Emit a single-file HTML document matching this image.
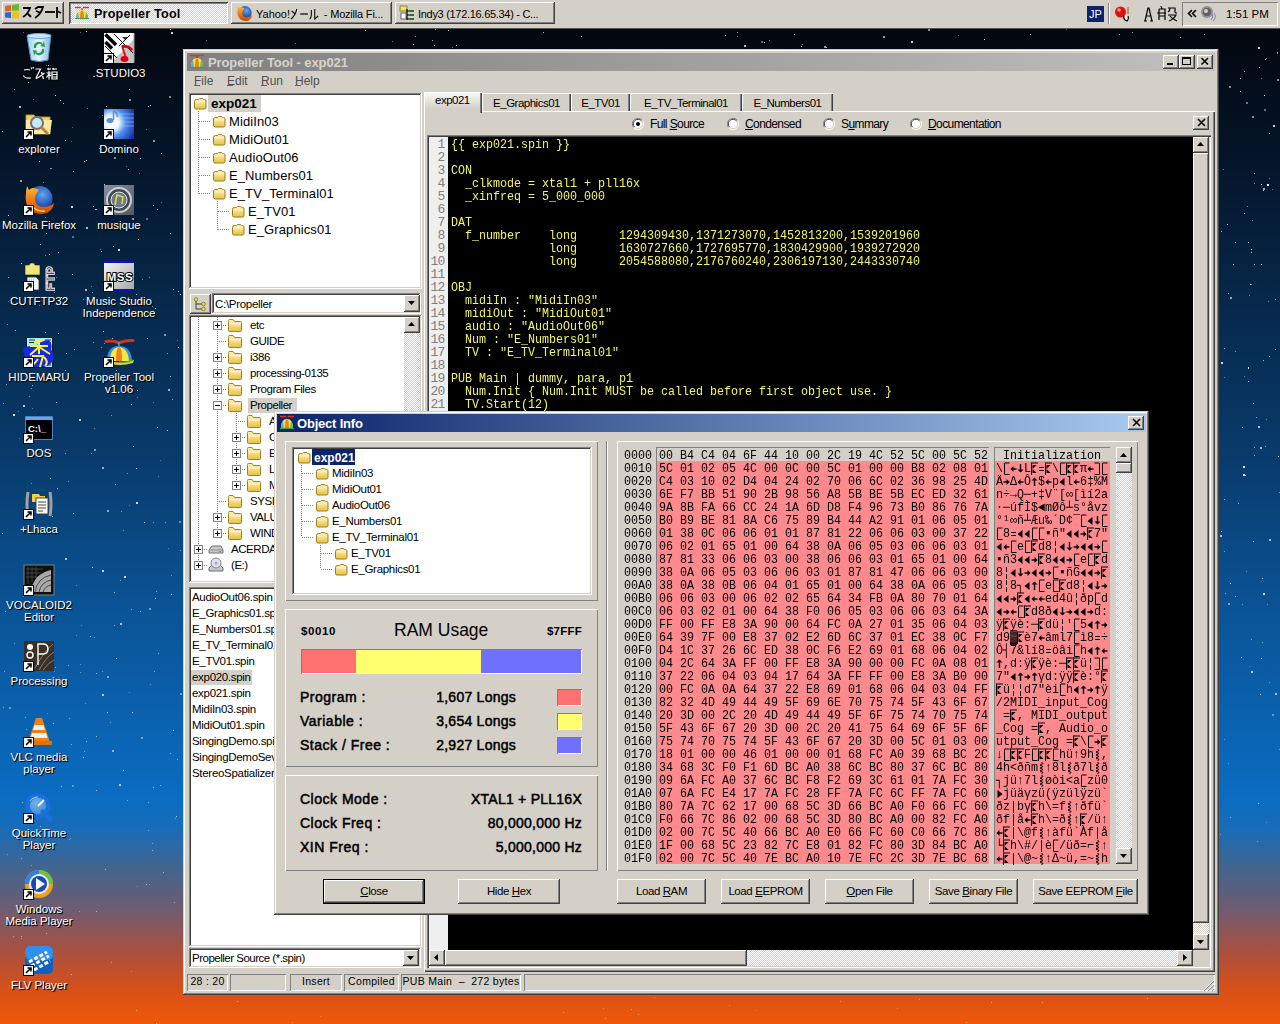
<!DOCTYPE html>
<html><head><meta charset="utf-8"><style>
*{margin:0;padding:0;box-sizing:border-box}
html,body{width:1280px;height:1024px;overflow:hidden}
body{position:relative;font-family:"Liberation Sans",sans-serif;font-size:11px;color:#000;
background:linear-gradient(to bottom,#03070e 28px,#041428 150px,#06284a 300px,#083a6a 450px,#0a5294 600px,#0a62b0 720px,#0a6cc2 800px,#1a6cb8 830px,#44648c 870px,#705c70 910px,#a85040 950px,#d85018 990px,#f05808 1024px)}
.a{position:absolute}
.t{position:absolute;white-space:pre;line-height:1}
.face{background:#d4d0c8}
.raised{background:#d4d0c8;box-shadow:inset -1px -1px #404040,inset 1px 1px #fff,inset -2px -2px #808080,inset 2px 2px #d4d0c8}
.btn{background:#d4d0c8;box-shadow:inset -1px -1px #404040,inset 1px 1px #fff,inset -2px -2px #808080}
.sunken{box-shadow:inset -1px -1px #fff,inset 1px 1px #808080,inset -2px -2px #d4d0c8,inset 2px 2px #404040}
.etched{box-shadow:inset 1px 1px #808080,inset -1px -1px #fff,inset 2px 2px #fff,inset -2px -2px #808080}
.win{background:#d4d0c8;box-shadow:inset -1px -1px #404040,inset 1px 1px #d4d0c8,inset -2px -2px #808080,inset 2px 2px #fff}
.mono{font-family:"Liberation Mono",monospace}
.lbl{position:absolute;color:#fff;font-size:11.5px;text-align:center;line-height:12px;text-shadow:1px 1px 0 #000,1px 1px 1px rgba(0,0,0,.6);white-space:pre}
.dotv{position:absolute;width:1px;background:repeating-linear-gradient(to bottom,#808080 0 1px,transparent 1px 2px)}
.doth{position:absolute;height:1px;background:repeating-linear-gradient(to right,#808080 0 1px,transparent 1px 2px)}
.pm{position:absolute;width:9px;height:9px;border:1px solid #808080;background:#fff}
.pm:before{content:"";position:absolute;left:1px;top:3px;width:5px;height:1px;background:#000}
.pm.p:after{content:"";position:absolute;left:3px;top:1px;width:1px;height:5px;background:#000}
.scr{background:repeating-conic-gradient(#fff 0 25%,#d4d0c8 0 50%) 0 0/2px 2px}
</style></head><body>
<svg width="0" height="0" style="position:absolute">
<defs>
<linearGradient id="fg" x1="0" y1="0" x2="0" y2="1"><stop offset="0" stop-color="#fff6c0"/><stop offset="1" stop-color="#e8c040"/></linearGradient>
<symbol id="fold" viewBox="0 0 16 16"><path d="M1.5 4.5 V13.5 Q1.5 14.5 2.5 14.5 H13.5 Q14.5 14.5 14.5 13.5 V5.5 Q14.5 4.5 13.5 4.5 H7.5 L6 2.5 H2.5 Q1.5 2.5 1.5 3.5Z" fill="url(#fg)" stroke="#a08020"/><path d="M2 7 H14" stroke="#fff8d0"/></symbol>
<symbol id="fold2" viewBox="0 0 16 16"><path d="M1.5 4.5 V13.5 Q1.5 14.5 2.5 14.5 H13.5 Q14.5 14.5 14.5 13.5 V5.5 Q14.5 4.5 13.5 4.5 H7.5 L6 2.5 H2.5 Q1.5 2.5 1.5 3.5Z" fill="url(#fg)" stroke="#a08020"/><path d="M2 6.5 H14" stroke="#c0a030"/></symbol>
<symbol id="foldS" viewBox="0 0 16 16"><path d="M2.5 6.5 Q2.5 4.5 4.5 4.5 H6.5 L7.5 3.5 H10 Q11 3.5 11.5 4.5 H12.5 Q14 4.5 14 6 V12.5 Q14 14 12.5 14 H4 Q2.5 14 2.5 12.5Z" fill="url(#fg)" stroke="#9a7a20"/><path d="M3.5 7 H13" stroke="#fff8d8" stroke-width=".8"/></symbol>
<symbol id="arr" viewBox="0 0 11 11"><rect x="0.5" y="0.5" width="10" height="10" fill="#fff" stroke="#000"/><path d="M3 8 L8 3 M4.5 3 H8 V6.5" stroke="#000" stroke-width="1.5" fill="none"/></symbol>
<symbol id="prop" viewBox="0 0 16 16"><path d="M1 1.5 H7 M9 1.5 H15" stroke="#e03030" stroke-width="1.6"/><path d="M8 1 V4" stroke="#404040"/><path d="M2 13 Q2 4 8 4 Q14 4 14 13Z" fill="#f0e040"/><path d="M6 13 Q6 5 8 4 Q10 5 10 13Z" fill="#f08020"/><path d="M2 13 Q2 8 4 6 L5 13Z" fill="#58b0e0"/><path d="M14 13 Q14 8 12 6 L11 13Z" fill="#60c060"/><path d="M1 13.5 H15" stroke="#40a040" stroke-width="1.2"/></symbol>
</defs></svg>
<svg class="a" style="left:0;top:0" width="1280" height="1024" shape-rendering="crispEdges"><rect x="1257" y="841" width="1" height="1" fill="#fff" opacity="0.42"/><rect x="1260" y="694" width="1" height="1" fill="#fff" opacity="0.69"/><rect x="129" y="89" width="1" height="1" fill="#fff" opacity="0.74"/><rect x="9" y="707" width="2" height="2" fill="#fff" opacity="0.40"/><rect x="170" y="753" width="1" height="1" fill="#fff" opacity="0.50"/><rect x="60" y="100" width="1" height="1" fill="#fff" opacity="0.61"/><rect x="136" y="1010" width="1" height="1" fill="#fff" opacity="0.41"/><rect x="107" y="510" width="2" height="2" fill="#fff" opacity="0.53"/><rect x="149" y="608" width="2" height="2" fill="#fff" opacity="0.43"/><rect x="178" y="347" width="1" height="1" fill="#fff" opacity="0.79"/><rect x="206" y="40" width="1" height="1" fill="#fff" opacity="0.47"/><rect x="435" y="29" width="1" height="1" fill="#fff" opacity="0.55"/><rect x="40" y="244" width="1" height="1" fill="#fff" opacity="0.75"/><rect x="150" y="105" width="1" height="1" fill="#fff" opacity="0.76"/><rect x="31" y="644" width="1" height="1" fill="#fff" opacity="0.52"/><rect x="1250" y="284" width="1" height="1" fill="#fff" opacity="0.80"/><rect x="160" y="460" width="1" height="1" fill="#fff" opacity="0.34"/><rect x="1221" y="531" width="1" height="1" fill="#fff" opacity="0.83"/><rect x="140" y="158" width="1" height="1" fill="#fff" opacity="0.77"/><rect x="1261" y="658" width="1" height="1" fill="#fff" opacity="0.75"/><rect x="33" y="99" width="1" height="1" fill="#fff" opacity="0.51"/><rect x="95" y="209" width="1" height="1" fill="#fff" opacity="0.71"/><rect x="71" y="974" width="1" height="1" fill="#fff" opacity="0.52"/><rect x="638" y="1014" width="1" height="1" fill="#fff" opacity="0.38"/><rect x="153" y="522" width="1" height="1" fill="#fff" opacity="0.48"/><rect x="148" y="106" width="1" height="1" fill="#fff" opacity="0.82"/><rect x="173" y="730" width="1" height="1" fill="#fff" opacity="0.68"/><rect x="29" y="668" width="1" height="1" fill="#fff" opacity="0.57"/><rect x="1246" y="102" width="2" height="2" fill="#fff" opacity="0.42"/><rect x="179" y="521" width="2" height="2" fill="#fff" opacity="0.37"/><rect x="23" y="405" width="2" height="2" fill="#fff" opacity="0.69"/><rect x="83" y="757" width="1" height="1" fill="#fff" opacity="0.64"/><rect x="1279" y="492" width="1" height="1" fill="#fff" opacity="0.47"/><rect x="1244" y="71" width="1" height="1" fill="#fff" opacity="0.72"/><rect x="96" y="673" width="1" height="1" fill="#fff" opacity="0.60"/><rect x="755" y="1010" width="1" height="1" fill="#fff" opacity="0.25"/><rect x="22" y="802" width="1" height="1" fill="#fff" opacity="0.56"/><rect x="1258" y="803" width="1" height="1" fill="#fff" opacity="0.62"/><rect x="13" y="414" width="2" height="2" fill="#fff" opacity="0.85"/><rect x="32" y="385" width="1" height="1" fill="#fff" opacity="0.59"/><rect x="58" y="252" width="1" height="1" fill="#fff" opacity="0.61"/><rect x="71" y="206" width="2" height="2" fill="#fff" opacity="0.84"/><rect x="1248" y="242" width="1" height="1" fill="#fff" opacity="0.95"/><rect x="1030" y="34" width="1" height="1" fill="#fff" opacity="0.70"/><rect x="1265" y="59" width="1" height="1" fill="#fff" opacity="0.81"/><rect x="46" y="65" width="1" height="1" fill="#fff" opacity="0.36"/><rect x="1269" y="539" width="2" height="2" fill="#fff" opacity="0.63"/><rect x="1235" y="351" width="1" height="1" fill="#fff" opacity="0.46"/><rect x="180" y="294" width="1" height="1" fill="#fff" opacity="0.85"/><rect x="36" y="127" width="2" height="2" fill="#fff" opacity="0.58"/><rect x="144" y="522" width="1" height="1" fill="#fff" opacity="0.74"/><rect x="126" y="166" width="1" height="1" fill="#fff" opacity="0.40"/><rect x="764" y="42" width="1" height="1" fill="#fff" opacity="0.90"/><rect x="31" y="360" width="2" height="2" fill="#fff" opacity="0.86"/><rect x="1227" y="224" width="1" height="1" fill="#fff" opacity="0.85"/><rect x="21" y="938" width="1" height="1" fill="#fff" opacity="0.44"/><rect x="1277" y="79" width="2" height="2" fill="#fff" opacity="0.54"/><rect x="157" y="427" width="1" height="1" fill="#fff" opacity="0.70"/><rect x="46" y="146" width="2" height="2" fill="#fff" opacity="0.50"/><rect x="769" y="40" width="1" height="1" fill="#fff" opacity="0.53"/><rect x="156" y="591" width="1" height="1" fill="#fff" opacity="0.50"/><rect x="966" y="1022" width="1" height="1" fill="#fff" opacity="0.34"/><rect x="1251" y="639" width="1" height="1" fill="#fff" opacity="0.50"/><rect x="1224" y="348" width="1" height="1" fill="#fff" opacity="0.63"/><rect x="28" y="820" width="1" height="1" fill="#fff" opacity="0.26"/><rect x="1278" y="456" width="1" height="1" fill="#fff" opacity="0.82"/><rect x="1230" y="297" width="2" height="2" fill="#fff" opacity="0.60"/><rect x="80" y="672" width="1" height="1" fill="#fff" opacity="0.41"/><rect x="55" y="667" width="1" height="1" fill="#fff" opacity="0.55"/><rect x="148" y="802" width="1" height="1" fill="#fff" opacity="0.55"/><rect x="152" y="850" width="1" height="1" fill="#fff" opacity="0.57"/><rect x="1221" y="362" width="2" height="2" fill="#fff" opacity="0.83"/><rect x="19" y="106" width="2" height="2" fill="#fff" opacity="0.74"/><rect x="172" y="399" width="1" height="1" fill="#fff" opacity="0.54"/><rect x="45" y="255" width="1" height="1" fill="#fff" opacity="0.44"/><rect x="605" y="1018" width="1" height="1" fill="#fff" opacity="0.45"/><rect x="53" y="678" width="1" height="1" fill="#fff" opacity="0.65"/><rect x="94" y="449" width="2" height="2" fill="#fff" opacity="0.52"/><rect x="7" y="854" width="1" height="1" fill="#fff" opacity="0.27"/><rect x="49" y="565" width="1" height="1" fill="#fff" opacity="0.74"/><rect x="121" y="511" width="1" height="1" fill="#fff" opacity="0.48"/><rect x="127" y="800" width="1" height="1" fill="#fff" opacity="0.51"/><rect x="74" y="349" width="1" height="1" fill="#fff" opacity="0.55"/><rect x="1228" y="763" width="1" height="1" fill="#fff" opacity="0.36"/><rect x="101" y="251" width="1" height="1" fill="#fff" opacity="0.95"/><rect x="1268" y="301" width="1" height="1" fill="#fff" opacity="0.43"/><rect x="365" y="30" width="1" height="1" fill="#fff" opacity="0.88"/><rect x="168" y="389" width="2" height="2" fill="#fff" opacity="0.64"/><rect x="38" y="837" width="1" height="1" fill="#fff" opacity="0.32"/><rect x="76" y="585" width="1" height="1" fill="#fff" opacity="0.38"/><rect x="155" y="598" width="1" height="1" fill="#fff" opacity="0.65"/><rect x="137" y="397" width="1" height="1" fill="#fff" opacity="0.39"/><rect x="911" y="41" width="2" height="2" fill="#fff" opacity="0.81"/><rect x="1261" y="184" width="1" height="1" fill="#fff" opacity="0.94"/><rect x="178" y="291" width="1" height="1" fill="#fff" opacity="0.79"/><rect x="1273" y="125" width="2" height="2" fill="#fff" opacity="0.80"/><rect x="31" y="773" width="2" height="2" fill="#fff" opacity="0.40"/><rect x="1246" y="571" width="1" height="1" fill="#fff" opacity="0.40"/><rect x="1253" y="541" width="1" height="1" fill="#fff" opacity="0.70"/><rect x="54" y="671" width="1" height="1" fill="#fff" opacity="0.34"/><rect x="7" y="324" width="1" height="1" fill="#fff" opacity="0.48"/><rect x="33" y="191" width="1" height="1" fill="#fff" opacity="0.37"/><rect x="49" y="357" width="1" height="1" fill="#fff" opacity="0.77"/><rect x="142" y="279" width="1" height="1" fill="#fff" opacity="0.49"/><rect x="146" y="129" width="1" height="1" fill="#fff" opacity="0.43"/><rect x="928" y="29" width="2" height="2" fill="#fff" opacity="0.54"/><rect x="93" y="342" width="1" height="1" fill="#fff" opacity="0.52"/><rect x="120" y="229" width="1" height="1" fill="#fff" opacity="0.91"/><rect x="32" y="205" width="2" height="2" fill="#fff" opacity="0.98"/><rect x="102" y="694" width="2" height="2" fill="#fff" opacity="0.68"/><rect x="161" y="202" width="1" height="1" fill="#fff" opacity="0.42"/><rect x="14" y="643" width="1" height="1" fill="#fff" opacity="0.41"/><rect x="68" y="665" width="1" height="1" fill="#fff" opacity="0.47"/><rect x="65" y="558" width="2" height="2" fill="#fff" opacity="0.68"/><rect x="1245" y="475" width="1" height="1" fill="#fff" opacity="0.63"/><rect x="72" y="236" width="2" height="2" fill="#fff" opacity="0.37"/><rect x="36" y="652" width="1" height="1" fill="#fff" opacity="0.54"/><rect x="63" y="103" width="1" height="1" fill="#fff" opacity="0.72"/><rect x="86" y="741" width="1" height="1" fill="#fff" opacity="0.61"/><rect x="1220" y="834" width="1" height="1" fill="#fff" opacity="0.37"/><rect x="86" y="160" width="1" height="1" fill="#fff" opacity="0.98"/><rect x="80" y="32" width="1" height="1" fill="#fff" opacity="0.44"/><rect x="156" y="1023" width="1" height="1" fill="#fff" opacity="0.50"/><rect x="1254" y="264" width="1" height="1" fill="#fff" opacity="0.69"/><rect x="1251" y="252" width="1" height="1" fill="#fff" opacity="0.71"/><rect x="119" y="784" width="2" height="2" fill="#fff" opacity="0.67"/><rect x="100" y="249" width="1" height="1" fill="#fff" opacity="0.46"/><rect x="96" y="736" width="1" height="1" fill="#fff" opacity="0.56"/><rect x="117" y="186" width="1" height="1" fill="#fff" opacity="0.43"/><rect x="112" y="338" width="1" height="1" fill="#fff" opacity="0.63"/><rect x="1251" y="249" width="1" height="1" fill="#fff" opacity="0.81"/><rect x="123" y="530" width="1" height="1" fill="#fff" opacity="0.46"/><rect x="111" y="415" width="1" height="1" fill="#fff" opacity="0.50"/><rect x="48" y="65" width="1" height="1" fill="#fff" opacity="0.72"/><rect x="154" y="671" width="1" height="1" fill="#fff" opacity="0.48"/><rect x="43" y="182" width="1" height="1" fill="#fff" opacity="0.49"/><rect x="1066" y="29" width="1" height="1" fill="#fff" opacity="0.35"/><rect x="39" y="349" width="1" height="1" fill="#fff" opacity="0.76"/><rect x="320" y="1016" width="1" height="1" fill="#fff" opacity="0.23"/><rect x="129" y="99" width="2" height="2" fill="#fff" opacity="0.55"/><rect x="1272" y="714" width="2" height="2" fill="#fff" opacity="0.36"/><rect x="28" y="512" width="1" height="1" fill="#fff" opacity="0.46"/><rect x="86" y="227" width="2" height="2" fill="#fff" opacity="0.68"/><rect x="1265" y="446" width="1" height="1" fill="#fff" opacity="0.55"/><rect x="39" y="305" width="1" height="1" fill="#fff" opacity="0.50"/><rect x="165" y="522" width="1" height="1" fill="#fff" opacity="0.45"/><rect x="104" y="184" width="1" height="1" fill="#fff" opacity="0.77"/><rect x="8" y="215" width="1" height="1" fill="#fff" opacity="0.98"/><rect x="65" y="453" width="1" height="1" fill="#fff" opacity="0.55"/><rect x="118" y="249" width="2" height="2" fill="#fff" opacity="0.86"/><rect x="96" y="209" width="1" height="1" fill="#fff" opacity="0.69"/><rect x="152" y="306" width="1" height="1" fill="#fff" opacity="0.53"/><rect x="21" y="936" width="1" height="1" fill="#fff" opacity="0.57"/><rect x="1277" y="53" width="1" height="1" fill="#fff" opacity="0.50"/><rect x="96" y="790" width="1" height="1" fill="#fff" opacity="0.56"/><rect x="19" y="438" width="1" height="1" fill="#fff" opacity="0.37"/><rect x="20" y="180" width="2" height="2" fill="#fff" opacity="0.59"/><rect x="113" y="246" width="1" height="1" fill="#fff" opacity="0.90"/><rect x="1230" y="583" width="1" height="1" fill="#fff" opacity="0.79"/><rect x="94" y="637" width="1" height="1" fill="#fff" opacity="0.36"/><rect x="1275" y="349" width="1" height="1" fill="#fff" opacity="0.94"/><rect x="132" y="218" width="2" height="2" fill="#fff" opacity="0.56"/><rect x="1258" y="426" width="2" height="2" fill="#fff" opacity="0.69"/><rect x="180" y="693" width="2" height="2" fill="#fff" opacity="0.43"/><rect x="31" y="865" width="1" height="1" fill="#fff" opacity="0.36"/><rect x="1235" y="242" width="1" height="1" fill="#fff" opacity="0.82"/><rect x="84" y="161" width="1" height="1" fill="#fff" opacity="0.95"/><rect x="1249" y="666" width="1" height="1" fill="#fff" opacity="0.28"/><rect x="141" y="737" width="2" height="2" fill="#fff" opacity="0.43"/><rect x="1254" y="447" width="1" height="1" fill="#fff" opacity="0.61"/><rect x="131" y="404" width="1" height="1" fill="#fff" opacity="0.67"/><rect x="25" y="717" width="1" height="1" fill="#fff" opacity="0.47"/><rect x="744" y="45" width="2" height="2" fill="#fff" opacity="0.73"/><rect x="47" y="713" width="1" height="1" fill="#fff" opacity="0.30"/><rect x="1240" y="91" width="1" height="1" fill="#fff" opacity="0.99"/><rect x="136" y="502" width="2" height="2" fill="#fff" opacity="0.84"/><rect x="171" y="32" width="2" height="2" fill="#fff" opacity="0.80"/><rect x="32" y="408" width="1" height="1" fill="#fff" opacity="0.39"/><rect x="180" y="550" width="1" height="1" fill="#fff" opacity="0.50"/><rect x="21" y="263" width="1" height="1" fill="#fff" opacity="0.80"/><rect x="1266" y="58" width="1" height="1" fill="#fff" opacity="0.54"/><rect x="94" y="428" width="1" height="1" fill="#fff" opacity="0.45"/><rect x="1147" y="998" width="1" height="1" fill="#fff" opacity="0.52"/><rect x="1228" y="293" width="1" height="1" fill="#fff" opacity="0.60"/><rect x="101" y="347" width="1" height="1" fill="#fff" opacity="0.43"/><rect x="991" y="1002" width="1" height="1" fill="#fff" opacity="0.44"/><rect x="18" y="411" width="1" height="1" fill="#fff" opacity="0.33"/><rect x="1224" y="739" width="1" height="1" fill="#fff" opacity="0.36"/><rect x="66" y="353" width="1" height="1" fill="#fff" opacity="0.81"/><rect x="171" y="594" width="1" height="1" fill="#fff" opacity="0.64"/><rect x="1119" y="34" width="1" height="1" fill="#fff" opacity="0.62"/><rect x="153" y="205" width="1" height="1" fill="#fff" opacity="0.78"/><rect x="146" y="884" width="1" height="1" fill="#fff" opacity="0.56"/><rect x="413" y="44" width="1" height="1" fill="#fff" opacity="0.77"/><rect x="92" y="292" width="1" height="1" fill="#fff" opacity="0.57"/><rect x="1264" y="95" width="1" height="1" fill="#fff" opacity="0.94"/><rect x="1269" y="133" width="1" height="1" fill="#fff" opacity="0.89"/><rect x="71" y="744" width="1" height="1" fill="#fff" opacity="0.52"/><rect x="1248" y="381" width="1" height="1" fill="#fff" opacity="0.68"/><rect x="41" y="205" width="1" height="1" fill="#fff" opacity="0.77"/><rect x="155" y="308" width="1" height="1" fill="#fff" opacity="0.92"/><rect x="147" y="338" width="1" height="1" fill="#fff" opacity="0.90"/><rect x="139" y="173" width="1" height="1" fill="#fff" opacity="0.44"/><rect x="158" y="476" width="1" height="1" fill="#fff" opacity="0.36"/><rect x="41" y="652" width="1" height="1" fill="#fff" opacity="0.80"/><rect x="176" y="816" width="1" height="1" fill="#fff" opacity="0.66"/><rect x="65" y="140" width="1" height="1" fill="#fff" opacity="0.96"/><rect x="49" y="453" width="1" height="1" fill="#fff" opacity="0.72"/><rect x="170" y="29" width="1" height="1" fill="#fff" opacity="0.98"/><rect x="802" y="44" width="1" height="1" fill="#fff" opacity="0.52"/><rect x="1249" y="295" width="1" height="1" fill="#fff" opacity="0.49"/><rect x="45" y="217" width="1" height="1" fill="#fff" opacity="0.53"/><rect x="70" y="838" width="1" height="1" fill="#fff" opacity="0.27"/><rect x="91" y="453" width="1" height="1" fill="#fff" opacity="0.53"/><rect x="149" y="884" width="1" height="1" fill="#fff" opacity="0.27"/><rect x="28" y="82" width="1" height="1" fill="#fff" opacity="0.97"/><rect x="138" y="239" width="1" height="1" fill="#fff" opacity="0.95"/><rect x="654" y="997" width="1" height="1" fill="#fff" opacity="0.27"/><rect x="146" y="218" width="2" height="2" fill="#fff" opacity="0.37"/><rect x="456" y="45" width="1" height="1" fill="#fff" opacity="0.98"/><rect x="1224" y="499" width="1" height="1" fill="#fff" opacity="0.57"/><rect x="50" y="478" width="1" height="1" fill="#fff" opacity="0.63"/><rect x="93" y="206" width="1" height="1" fill="#fff" opacity="0.96"/><rect x="49" y="254" width="1" height="1" fill="#fff" opacity="0.72"/><rect x="129" y="505" width="1" height="1" fill="#fff" opacity="0.32"/><rect x="1267" y="604" width="1" height="1" fill="#fff" opacity="0.42"/><rect x="1254" y="455" width="1" height="1" fill="#fff" opacity="0.59"/><rect x="6" y="384" width="1" height="1" fill="#fff" opacity="0.63"/><rect x="3" y="707" width="1" height="1" fill="#fff" opacity="0.51"/><rect x="115" y="121" width="2" height="2" fill="#fff" opacity="0.66"/><rect x="292" y="1022" width="1" height="1" fill="#fff" opacity="0.35"/><rect x="102" y="115" width="1" height="1" fill="#fff" opacity="0.50"/><rect x="85" y="289" width="2" height="2" fill="#fff" opacity="0.65"/><rect x="132" y="712" width="1" height="1" fill="#fff" opacity="0.75"/><rect x="1275" y="693" width="2" height="2" fill="#fff" opacity="0.61"/><rect x="5" y="611" width="1" height="1" fill="#fff" opacity="0.63"/><rect x="46" y="933" width="1" height="1" fill="#fff" opacity="0.51"/><rect x="1266" y="822" width="1" height="1" fill="#fff" opacity="0.30"/><rect x="111" y="962" width="1" height="1" fill="#fff" opacity="0.39"/><rect x="116" y="370" width="1" height="1" fill="#fff" opacity="0.64"/><rect x="72" y="127" width="1" height="1" fill="#fff" opacity="0.38"/><rect x="143" y="376" width="1" height="1" fill="#fff" opacity="0.51"/><rect x="161" y="153" width="1" height="1" fill="#fff" opacity="0.79"/><rect x="25" y="569" width="1" height="1" fill="#fff" opacity="0.72"/><rect x="116" y="658" width="1" height="1" fill="#fff" opacity="0.78"/><rect x="84" y="751" width="1" height="1" fill="#fff" opacity="0.46"/><rect x="114" y="592" width="1" height="1" fill="#fff" opacity="0.54"/><rect x="1260" y="447" width="2" height="2" fill="#fff" opacity="0.65"/><rect x="824" y="46" width="2" height="2" fill="#fff" opacity="0.60"/><rect x="69" y="839" width="1" height="1" fill="#fff" opacity="0.35"/><rect x="1277" y="52" width="1" height="1" fill="#fff" opacity="0.75"/><rect x="153" y="787" width="1" height="1" fill="#fff" opacity="0.58"/><rect x="1230" y="817" width="1" height="1" fill="#fff" opacity="0.50"/><rect x="801" y="46" width="1" height="1" fill="#fff" opacity="0.85"/><rect x="1256" y="417" width="1" height="1" fill="#fff" opacity="0.50"/><rect x="105" y="869" width="1" height="1" fill="#fff" opacity="0.50"/><rect x="51" y="168" width="1" height="1" fill="#fff" opacity="0.55"/><rect x="1042" y="1002" width="1" height="1" fill="#fff" opacity="0.44"/><rect x="1240" y="78" width="1" height="1" fill="#fff" opacity="0.71"/><rect x="106" y="106" width="1" height="1" fill="#fff" opacity="0.80"/><rect x="49" y="581" width="2" height="2" fill="#fff" opacity="0.51"/><rect x="1251" y="284" width="1" height="1" fill="#fff" opacity="0.41"/><rect x="42" y="529" width="1" height="1" fill="#fff" opacity="0.32"/><rect x="1279" y="749" width="1" height="1" fill="#fff" opacity="0.42"/><rect x="1269" y="356" width="1" height="1" fill="#fff" opacity="0.81"/><rect x="90" y="636" width="1" height="1" fill="#fff" opacity="0.60"/><rect x="737" y="32" width="1" height="1" fill="#fff" opacity="0.54"/><rect x="30" y="45" width="1" height="1" fill="#fff" opacity="0.73"/><rect x="45" y="332" width="1" height="1" fill="#fff" opacity="0.73"/><rect x="80" y="664" width="1" height="1" fill="#fff" opacity="0.37"/><rect x="79" y="911" width="1" height="1" fill="#fff" opacity="0.35"/><rect x="27" y="916" width="1" height="1" fill="#fff" opacity="0.36"/><rect x="114" y="625" width="1" height="1" fill="#fff" opacity="0.53"/><rect x="1258" y="47" width="2" height="2" fill="#fff" opacity="0.78"/><rect x="149" y="277" width="1" height="1" fill="#fff" opacity="0.45"/><rect x="61" y="786" width="1" height="1" fill="#fff" opacity="0.54"/><rect x="72" y="274" width="1" height="1" fill="#fff" opacity="0.91"/><rect x="169" y="96" width="2" height="2" fill="#fff" opacity="0.50"/><rect x="14" y="89" width="1" height="1" fill="#fff" opacity="0.60"/><rect x="99" y="148" width="1" height="1" fill="#fff" opacity="0.59"/><rect x="1244" y="213" width="1" height="1" fill="#fff" opacity="0.66"/><rect x="87" y="108" width="1" height="1" fill="#fff" opacity="0.43"/><rect x="105" y="388" width="1" height="1" fill="#fff" opacity="0.49"/><rect x="1259" y="67" width="1" height="1" fill="#fff" opacity="0.92"/><rect x="177" y="759" width="1" height="1" fill="#fff" opacity="0.54"/><rect x="76" y="635" width="1" height="1" fill="#fff" opacity="0.38"/><rect x="150" y="684" width="1" height="1" fill="#fff" opacity="0.36"/><rect x="794" y="34" width="1" height="1" fill="#fff" opacity="0.99"/><rect x="57" y="227" width="1" height="1" fill="#fff" opacity="0.61"/><rect x="83" y="299" width="1" height="1" fill="#fff" opacity="0.49"/><rect x="127" y="473" width="1" height="1" fill="#fff" opacity="0.43"/><rect x="1242" y="427" width="1" height="1" fill="#fff" opacity="0.72"/><rect x="61" y="297" width="1" height="1" fill="#fff" opacity="0.77"/><rect x="1244" y="376" width="1" height="1" fill="#fff" opacity="0.33"/><rect x="4" y="671" width="1" height="1" fill="#fff" opacity="0.51"/><rect x="55" y="95" width="1" height="1" fill="#fff" opacity="0.87"/><rect x="1267" y="184" width="2" height="2" fill="#fff" opacity="0.96"/><rect x="1262" y="642" width="1" height="1" fill="#fff" opacity="0.50"/><rect x="73" y="171" width="1" height="1" fill="#fff" opacity="0.78"/><rect x="52" y="516" width="1" height="1" fill="#fff" opacity="0.64"/><rect x="130" y="193" width="1" height="1" fill="#fff" opacity="0.40"/><rect x="110" y="722" width="1" height="1" fill="#fff" opacity="0.40"/><rect x="432" y="40" width="1" height="1" fill="#fff" opacity="0.66"/><rect x="120" y="580" width="1" height="1" fill="#fff" opacity="0.49"/><rect x="1233" y="264" width="1" height="1" fill="#fff" opacity="0.75"/><rect x="23" y="32" width="1" height="1" fill="#fff" opacity="0.44"/><rect x="131" y="609" width="1" height="1" fill="#fff" opacity="0.47"/><rect x="153" y="140" width="2" height="2" fill="#fff" opacity="0.56"/><rect x="123" y="770" width="1" height="1" fill="#fff" opacity="0.63"/><rect x="128" y="150" width="1" height="1" fill="#fff" opacity="0.46"/><rect x="157" y="209" width="1" height="1" fill="#fff" opacity="0.73"/><rect x="91" y="286" width="1" height="1" fill="#fff" opacity="0.40"/><rect x="171" y="575" width="1" height="1" fill="#fff" opacity="0.42"/><rect x="137" y="390" width="1" height="1" fill="#fff" opacity="0.81"/><rect x="392" y="41" width="1" height="1" fill="#fff" opacity="0.40"/><rect x="1235" y="596" width="1" height="1" fill="#fff" opacity="0.54"/><rect x="603" y="1008" width="1" height="1" fill="#fff" opacity="0.33"/><rect x="73" y="513" width="1" height="1" fill="#fff" opacity="0.69"/><rect x="96" y="911" width="1" height="1" fill="#fff" opacity="0.59"/><rect x="1248" y="368" width="1" height="1" fill="#fff" opacity="0.82"/><rect x="2" y="533" width="1" height="1" fill="#fff" opacity="0.81"/><rect x="1221" y="231" width="1" height="1" fill="#fff" opacity="0.71"/><rect x="92" y="567" width="1" height="1" fill="#fff" opacity="0.81"/><rect x="167" y="353" width="1" height="1" fill="#fff" opacity="0.52"/><rect x="1266" y="419" width="1" height="1" fill="#fff" opacity="0.38"/><rect x="31" y="483" width="1" height="1" fill="#fff" opacity="0.42"/><rect x="170" y="233" width="1" height="1" fill="#fff" opacity="0.64"/><rect x="131" y="971" width="1" height="1" fill="#fff" opacity="0.32"/><rect x="103" y="331" width="1" height="1" fill="#fff" opacity="0.83"/><rect x="1224" y="377" width="1" height="1" fill="#fff" opacity="0.36"/><rect x="104" y="343" width="1" height="1" fill="#fff" opacity="0.51"/><rect x="34" y="496" width="1" height="1" fill="#fff" opacity="0.64"/><rect x="106" y="36" width="1" height="1" fill="#fff" opacity="0.45"/><rect x="737" y="36" width="1" height="1" fill="#fff" opacity="0.46"/><rect x="1262" y="578" width="1" height="1" fill="#fff" opacity="0.62"/><rect x="883" y="36" width="2" height="2" fill="#fff" opacity="0.60"/><rect x="563" y="1012" width="1" height="1" fill="#fff" opacity="0.41"/><rect x="68" y="481" width="1" height="1" fill="#fff" opacity="0.41"/><rect x="39" y="161" width="1" height="1" fill="#fff" opacity="0.98"/><rect x="85" y="703" width="1" height="1" fill="#fff" opacity="0.33"/><rect x="237" y="1001" width="1" height="1" fill="#fff" opacity="0.42"/><rect x="120" y="73" width="1" height="1" fill="#fff" opacity="0.82"/><rect x="1247" y="206" width="1" height="1" fill="#fff" opacity="0.45"/><rect x="170" y="376" width="1" height="1" fill="#fff" opacity="0.73"/><rect x="107" y="712" width="1" height="1" fill="#fff" opacity="0.66"/><rect x="29" y="644" width="2" height="2" fill="#fff" opacity="0.37"/><rect x="1253" y="403" width="1" height="1" fill="#fff" opacity="0.71"/><rect x="23" y="596" width="1" height="1" fill="#fff" opacity="0.32"/><rect x="1224" y="551" width="1" height="1" fill="#fff" opacity="0.49"/><rect x="29" y="565" width="2" height="2" fill="#fff" opacity="0.46"/><rect x="133" y="446" width="1" height="1" fill="#fff" opacity="0.88"/><rect x="1263" y="190" width="1" height="1" fill="#fff" opacity="0.74"/><rect x="1238" y="503" width="1" height="1" fill="#fff" opacity="0.60"/><rect x="1243" y="466" width="2" height="2" fill="#fff" opacity="0.88"/><rect x="57" y="488" width="1" height="1" fill="#fff" opacity="0.68"/><rect x="175" y="818" width="1" height="1" fill="#fff" opacity="0.33"/><rect x="2" y="131" width="1" height="1" fill="#fff" opacity="0.66"/><rect x="452" y="47" width="1" height="1" fill="#fff" opacity="0.45"/><rect x="86" y="31" width="1" height="1" fill="#fff" opacity="0.91"/><rect x="114" y="157" width="2" height="2" fill="#fff" opacity="0.51"/><rect x="543" y="32" width="1" height="1" fill="#fff" opacity="0.70"/><rect x="919" y="999" width="1" height="1" fill="#fff" opacity="0.35"/><rect x="102" y="570" width="2" height="2" fill="#fff" opacity="0.76"/><rect x="8" y="277" width="1" height="1" fill="#fff" opacity="0.55"/><rect x="1223" y="169" width="1" height="1" fill="#fff" opacity="0.44"/><rect x="115" y="484" width="1" height="1" fill="#fff" opacity="0.56"/><rect x="1263" y="593" width="2" height="2" fill="#fff" opacity="0.77"/><rect x="1269" y="178" width="1" height="1" fill="#fff" opacity="0.39"/><rect x="174" y="902" width="1" height="1" fill="#fff" opacity="0.42"/><rect x="128" y="169" width="1" height="1" fill="#fff" opacity="0.76"/><rect x="158" y="653" width="1" height="1" fill="#fff" opacity="0.57"/><rect x="46" y="233" width="1" height="1" fill="#fff" opacity="0.88"/><rect x="136" y="294" width="1" height="1" fill="#fff" opacity="0.68"/><rect x="434" y="45" width="1" height="1" fill="#fff" opacity="0.87"/><rect x="31" y="388" width="1" height="1" fill="#fff" opacity="0.44"/><rect x="1242" y="604" width="1" height="1" fill="#fff" opacity="0.43"/><rect x="54" y="292" width="1" height="1" fill="#fff" opacity="0.53"/><rect x="81" y="625" width="1" height="1" fill="#fff" opacity="0.32"/><rect x="1263" y="360" width="1" height="1" fill="#fff" opacity="0.68"/><rect x="56" y="277" width="1" height="1" fill="#fff" opacity="0.42"/><rect x="43" y="617" width="1" height="1" fill="#fff" opacity="0.54"/><rect x="1252" y="116" width="2" height="2" fill="#fff" opacity="0.53"/><rect x="415" y="36" width="1" height="1" fill="#fff" opacity="0.47"/><rect x="1254" y="173" width="1" height="1" fill="#fff" opacity="0.68"/><rect x="729" y="1005" width="1" height="1" fill="#fff" opacity="0.35"/><rect x="1272" y="189" width="1" height="1" fill="#fff" opacity="0.42"/><rect x="1261" y="264" width="1" height="1" fill="#fff" opacity="0.96"/><rect x="102" y="467" width="2" height="2" fill="#fff" opacity="0.59"/><rect x="1132" y="32" width="1" height="1" fill="#fff" opacity="0.63"/><rect x="1269" y="682" width="1" height="1" fill="#fff" opacity="0.39"/><rect x="1275" y="299" width="1" height="1" fill="#fff" opacity="0.58"/><rect x="31" y="568" width="1" height="1" fill="#fff" opacity="0.83"/><rect x="26" y="729" width="1" height="1" fill="#fff" opacity="0.49"/><rect x="69" y="718" width="1" height="1" fill="#fff" opacity="0.45"/><rect x="118" y="122" width="1" height="1" fill="#fff" opacity="0.47"/><rect x="65" y="370" width="1" height="1" fill="#fff" opacity="0.60"/><rect x="71" y="141" width="1" height="1" fill="#fff" opacity="0.37"/><rect x="581" y="36" width="1" height="1" fill="#fff" opacity="0.95"/><rect x="725" y="35" width="1" height="1" fill="#fff" opacity="0.68"/><rect x="826" y="47" width="1" height="1" fill="#fff" opacity="0.69"/><rect x="160" y="785" width="1" height="1" fill="#fff" opacity="0.54"/><rect x="50" y="168" width="1" height="1" fill="#fff" opacity="0.58"/><rect x="40" y="826" width="1" height="1" fill="#fff" opacity="0.59"/><rect x="1220" y="535" width="2" height="2" fill="#fff" opacity="0.66"/><rect x="1254" y="183" width="1" height="1" fill="#fff" opacity="0.57"/><rect x="13" y="936" width="1" height="1" fill="#fff" opacity="0.38"/><rect x="136" y="468" width="1" height="1" fill="#fff" opacity="0.76"/><rect x="21" y="858" width="1" height="1" fill="#fff" opacity="0.43"/><rect x="120" y="623" width="2" height="2" fill="#fff" opacity="0.66"/><rect x="140" y="611" width="1" height="1" fill="#fff" opacity="0.57"/><rect x="1225" y="593" width="1" height="1" fill="#fff" opacity="0.55"/><rect x="55" y="684" width="2" height="2" fill="#fff" opacity="0.63"/><rect x="56" y="402" width="1" height="1" fill="#fff" opacity="0.70"/><rect x="152" y="843" width="1" height="1" fill="#fff" opacity="0.44"/><rect x="107" y="676" width="2" height="2" fill="#fff" opacity="0.44"/><rect x="1263" y="188" width="2" height="2" fill="#fff" opacity="0.63"/><rect x="124" y="576" width="2" height="2" fill="#fff" opacity="0.81"/><rect x="163" y="872" width="1" height="1" fill="#fff" opacity="0.52"/><rect x="102" y="671" width="1" height="1" fill="#fff" opacity="0.39"/><rect x="53" y="723" width="1" height="1" fill="#fff" opacity="0.59"/><rect x="15" y="330" width="1" height="1" fill="#fff" opacity="0.63"/><rect x="3" y="403" width="1" height="1" fill="#fff" opacity="0.55"/><rect x="1251" y="671" width="2" height="2" fill="#fff" opacity="0.74"/><rect x="112" y="750" width="2" height="2" fill="#fff" opacity="0.55"/><rect x="1248" y="367" width="1" height="1" fill="#fff" opacity="0.92"/><rect x="168" y="548" width="1" height="1" fill="#fff" opacity="0.34"/><rect x="631" y="1009" width="1" height="1" fill="#fff" opacity="0.42"/><rect x="1229" y="86" width="2" height="2" fill="#fff" opacity="0.54"/><rect x="153" y="402" width="1" height="1" fill="#fff" opacity="0.39"/><rect x="79" y="419" width="2" height="2" fill="#fff" opacity="0.70"/><rect x="984" y="39" width="1" height="1" fill="#fff" opacity="0.99"/><rect x="72" y="785" width="2" height="2" fill="#fff" opacity="0.35"/><rect x="958" y="35" width="1" height="1" fill="#fff" opacity="0.47"/><rect x="58" y="333" width="1" height="1" fill="#fff" opacity="0.90"/><rect x="897" y="1008" width="1" height="1" fill="#fff" opacity="0.27"/><rect x="129" y="692" width="1" height="1" fill="#fff" opacity="0.28"/><rect x="29" y="396" width="1" height="1" fill="#fff" opacity="0.45"/><rect x="1241" y="657" width="1" height="1" fill="#fff" opacity="0.79"/><rect x="177" y="340" width="1" height="1" fill="#fff" opacity="0.43"/><rect x="1243" y="474" width="2" height="2" fill="#fff" opacity="0.88"/><rect x="8" y="301" width="1" height="1" fill="#fff" opacity="0.41"/><rect x="1180" y="37" width="1" height="1" fill="#fff" opacity="0.60"/><rect x="164" y="334" width="2" height="2" fill="#fff" opacity="0.51"/><rect x="1264" y="109" width="2" height="2" fill="#fff" opacity="0.40"/><rect x="148" y="830" width="1" height="1" fill="#fff" opacity="0.44"/><rect x="167" y="430" width="1" height="1" fill="#fff" opacity="0.75"/><rect x="1261" y="78" width="1" height="1" fill="#fff" opacity="0.43"/><rect x="761" y="41" width="2" height="2" fill="#fff" opacity="0.40"/><rect x="295" y="43" width="1" height="1" fill="#fff" opacity="0.40"/><rect x="840" y="1001" width="1" height="1" fill="#fff" opacity="0.34"/><rect x="1252" y="220" width="1" height="1" fill="#fff" opacity="0.50"/><rect x="448" y="30" width="1" height="1" fill="#fff" opacity="0.74"/><rect x="1228" y="603" width="2" height="2" fill="#fff" opacity="0.43"/><rect x="173" y="289" width="1" height="1" fill="#fff" opacity="0.63"/><rect x="1204" y="34" width="1" height="1" fill="#fff" opacity="0.58"/><rect x="137" y="886" width="1" height="1" fill="#fff" opacity="0.23"/></svg>
<svg class="a" style="left:23px;top:32px" width="32" height="32" viewBox="0 0 32 32"><defs><linearGradient id="ib" x1="0" x2="1"><stop offset="0" stop-color="#9ad0f0"/><stop offset=".5" stop-color="#e8f6ff"/><stop offset="1" stop-color="#80b8e0"/></linearGradient></defs><path d="M4 4 Q16 0 28 3 L25 28 Q16 31 8 28Z" fill="url(#ib)" stroke="#5090c0"/><ellipse cx="16" cy="4" rx="12" ry="2.5" fill="#c8e8ff" stroke="#70a8d0"/><path d="M11 16 A5 5 0 0 1 20 12 L21 9 L22 15 L17 14 L19 13 A3.5 3.5 0 0 0 13 16Z M21 17 A5 5 0 0 1 12 21 L11 24 L10 18 L15 19 L13 20 A3.5 3.5 0 0 0 19 17Z" fill="#20a040"/></svg>
<svg class="a" style="left:22px;top:67px;filter:drop-shadow(1px 1px 0 #000)" width="36" height="13" viewBox="0 0 36 13" fill="none" stroke="#fff" stroke-width="1.2"><path d="M2 3 Q5 2 8 3 M1.5 8.5 Q2 11.5 9 11 M9 0.5 L10 2 M10.8 0 L11.8 1.5"/><path d="M13.5 2 H18.5 Q16 7 14.5 10 Q13.5 12 15.5 11 Q19 9 22.5 6 M19.5 5 Q20.5 9 21.5 12"/><path d="M26 1 L27 3 M25 2 H29 M31 1 L32 3 M30 2 H35 M24.5 6 H29 M27 4 V12.5 M27 7 L24.5 10.5 M27 7.5 L29 9 M30 5 H35 V12 H30Z M30 7.5 H35 M30 10 H35"/></svg>
<svg class="a" style="left:23px;top:108px" width="32" height="32" viewBox="0 0 32 32"><path d="M3 7 H11 L13 9 H27 V26 H3Z" fill="#f0d070" stroke="#b09030"/><path d="M3 12 H29 L27 26 H3Z" fill="#ffe8a0"/><circle cx="14" cy="15" r="6" fill="#c8e8ff" stroke="#707070" stroke-width="2"/><path d="M18 19 L25 26" stroke="#c08040" stroke-width="3"/><use href="#arr" x="0" y="21" width="11" height="11"/></svg>
<div class="lbl" style="left:-6px;top:143px;width:90px">explorer</div>
<svg class="a" style="left:23px;top:184px" width="32" height="32" viewBox="0 0 32 32"><defs><radialGradient id="ffg" cx=".6" cy=".35" r=".7"><stop offset="0" stop-color="#60a8f0"/><stop offset=".6" stop-color="#2858b8"/><stop offset="1" stop-color="#183880"/></radialGradient><linearGradient id="ffo" x1="0" y1="0" x2="0" y2="1"><stop offset="0" stop-color="#f8c030"/><stop offset=".5" stop-color="#f07818"/><stop offset="1" stop-color="#c84808"/></linearGradient></defs><circle cx="17" cy="14.5" r="12.5" fill="url(#ffg)"/><path d="M3 9 Q1 20 8 27 Q15 32 24 29 Q30 26 31 19 Q27 23 20 23 Q13 23 12 16 Q12 10 16 6 Q9 2 6 6 L4 2 Q3 6 3 9Z" fill="url(#ffo)"/><path d="M9 22 Q14 28 22 27" stroke="#f8d060" stroke-width="1.5" fill="none"/><use href="#arr" x="0" y="21" width="11" height="11"/></svg>
<div class="lbl" style="left:-6px;top:219px;width:90px">Mozilla Firefox</div>
<svg class="a" style="left:23px;top:260px" width="32" height="32" viewBox="0 0 32 32"><path d="M2 5 H6 L7.5 3 H11 L12 5 H17 V15 H2Z" fill="#ece878" stroke="#202010" stroke-width=".6"/><path d="M4 17 H13 L16 20 V30 H4Z" fill="#f4f4fa" stroke="#303030" stroke-width=".8"/><path d="M6 20 H12" stroke="#8090a0" stroke-dasharray="1 1"/><text transform="translate(31.5,31) rotate(-90)" font-family="Liberation Sans" font-size="13" font-weight="bold" fill="#0c1a30" stroke="#e8e8f0" stroke-width="1">FTP</text><use href="#arr" x="0" y="21" width="11" height="11"/></svg>
<div class="lbl" style="left:-6px;top:295px;width:90px">CUTFTP32</div>
<svg class="a" style="left:23px;top:336px" width="32" height="32" viewBox="0 0 32 32"><rect x="3.5" y="1.5" width="26" height="30" fill="#a8eef4" stroke="#102030"/><path d="M6 4 H12 M6 6.5 H12 M22 4 H28 M22 6.5 H28 M22 9 H28 M22 27 H28 M22 29 H28" stroke="#203040" stroke-width="1"/><path d="M0 13 Q5 8 12 11 Q18 4 26 4 Q30 10 28 13 L31 20 Q30 28 22 31 H12 Q6 30 4 24 Q1 20 0 13Z" fill="#1428e8"/><path d="M11 6 L21 4 M16 4 V18 M7 10 H25 M16 11 L7 19 M16 11 L27 18 M9 20 H20 L17 31 M15 23 Q12 27 9 30 M21 21 Q26 26 22 30" stroke="#f8f048" stroke-width="2" fill="none"/><use href="#arr" x="0" y="21" width="11" height="11"/></svg>
<div class="lbl" style="left:-6px;top:371px;width:90px">HIDEMARU</div>
<svg class="a" style="left:23px;top:412px" width="32" height="32" viewBox="0 0 32 32"><rect x="2.5" y="5" width="27" height="22.5" fill="#000" stroke="#5080c0"/><rect x="2.5" y="4.5" width="27" height="3.5" fill="#60a8f0"/><text x="5" y="19.5" font-family="Liberation Sans" font-size="9.5" font-weight="bold" fill="#fff">C:\_</text><use href="#arr" x="0" y="21" width="11" height="11"/></svg>
<div class="lbl" style="left:-6px;top:447px;width:90px">DOS</div>
<svg class="a" style="left:23px;top:488px" width="32" height="32" viewBox="0 0 32 32"><path d="M5 4 Q3 16 5 28 M27 4 Q29 16 27 28" stroke="#a0a0a0" stroke-width="3" fill="none"/><path d="M10 2 H22" stroke="#404040" stroke-width="2" stroke-dasharray="1 1"/><path d="M9 6 H16 L17 8 H22 V14 H9Z" fill="#f0d040"/><rect x="13" y="10" width="12" height="16" fill="#fff" stroke="#404040"/><path d="M15 14 H23 M15 17 H23 M15 20 H23 M15 23 H20" stroke="#404040"/><use href="#arr" x="0" y="21" width="11" height="11"/></svg>
<div class="lbl" style="left:-6px;top:523px;width:90px">+Lhaca</div>
<svg class="a" style="left:23px;top:564px" width="32" height="32" viewBox="0 0 32 32"><rect x="1" y="1" width="30" height="30" fill="#101010" stroke="#808080"/><path d="M3 5 H20 M3 9 H18 M3 13 H16 M5 3 V20 M9 3 V18 M13 3 V14" stroke="#606060" stroke-width=".6"/><path d="M8 28 Q10 10 28 6 V28Z" fill="#d0d0d0" opacity=".8"/><path d="M12 28 Q14 14 28 11 M16 28 Q18 18 28 16 M20 28 Q22 22 28 21" stroke="#303030" stroke-width=".8" fill="none"/><use href="#arr" x="0" y="21" width="11" height="11"/></svg>
<div class="lbl" style="left:-6px;top:599px;width:90px">VOCALOID2<br>Editor</div>
<svg class="a" style="left:23px;top:640px" width="32" height="32" viewBox="0 0 32 32"><rect x="1" y="1" width="30" height="30" fill="#3a3028"/><path d="M12 28 Q22 10 30 4 M16 30 Q24 16 31 12 M20 30 Q26 22 31 20" stroke="#a09080" stroke-width=".8" fill="none"/><circle cx="7" cy="7" r="3" fill="#fff"/><circle cx="7" cy="15" r="3" fill="none" stroke="#fff" stroke-width="1.4"/><path d="M15 25 V4 H20 Q25 4 25 9 Q25 14 20 14 H15" stroke="#fff" stroke-width="1.4" fill="none"/><use href="#arr" x="0" y="21" width="11" height="11"/></svg>
<div class="lbl" style="left:-6px;top:675px;width:90px">Processing</div>
<svg class="a" style="left:23px;top:716px" width="32" height="32" viewBox="0 0 32 32"><path d="M13 2 H19 L27 26 H5Z" fill="#f08010"/><path d="M11.5 9 H20.5 L22 14 H10Z M9 17 H23 L24.5 22 H7.5Z" fill="#f0f0f0"/><rect x="3" y="25" width="26" height="4" fill="#e07000"/><use href="#arr" x="0" y="21" width="11" height="11"/></svg>
<div class="lbl" style="left:-6px;top:751px;width:90px">VLC media<br>player</div>
<svg class="a" style="left:23px;top:792px" width="32" height="32" viewBox="0 0 32 32"><defs><radialGradient id="qtg" cx=".4" cy=".35" r=".7"><stop offset="0" stop-color="#e8f4ff"/><stop offset="1" stop-color="#60a8e8"/></radialGradient></defs><circle cx="15" cy="14" r="9" fill="url(#qtg)" opacity=".5"/><circle cx="15" cy="14" r="10.5" fill="none" stroke="#1a70d8" stroke-width="4.5"/><path d="M20 20 L27 27" stroke="#1a70d8" stroke-width="5" stroke-linecap="round"/><path d="M15 14 L21 8" stroke="#fff" stroke-width="1.8"/><path d="M7 9 Q10 5 15 5" stroke="#90d0ff" stroke-width="1.2" fill="none"/><use href="#arr" x="0" y="21" width="11" height="11"/></svg>
<div class="lbl" style="left:-6px;top:827px;width:90px">QuickTime<br>Player</div>
<svg class="a" style="left:23px;top:868px" width="32" height="32" viewBox="0 0 32 32"><circle cx="16" cy="16" r="14" fill="#f0a020"/><path d="M16 2 A14 14 0 0 1 30 16 L16 16Z" fill="#70c040"/><path d="M2 16 A14 14 0 0 1 16 2 L16 16Z" fill="#3080e0"/><circle cx="16" cy="16" r="10" fill="#e8f0ff"/><circle cx="16" cy="16" r="8" fill="#1848b0"/><path d="M13 10 L22 16 L13 22Z" fill="#fff"/><use href="#arr" x="0" y="21" width="11" height="11"/></svg>
<div class="lbl" style="left:-6px;top:903px;width:90px">Windows<br>Media Player</div>
<svg class="a" style="left:23px;top:944px" width="32" height="32" viewBox="0 0 32 32"><rect x="2" y="2" width="28" height="28" rx="5" fill="#1060c0"/><rect x="2" y="2" width="28" height="14" rx="5" fill="#3090f0"/><path d="M6 18 L24 8 M8 22 L26 12 M11 26 L27 17" stroke="#fff" stroke-width="3" stroke-dasharray="4 2"/><use href="#arr" x="0" y="21" width="11" height="11"/></svg>
<div class="lbl" style="left:-6px;top:979px;width:90px">FLV Player</div>
<svg class="a" style="left:103px;top:32px" width="32" height="32" viewBox="0 0 32 32"><rect x="1" y="1" width="30" height="30" fill="#fff"/><path d="M31 7 L8 31 H31Z" fill="#c4c4c4"/><path d="M31 1 V31" stroke="#a0a0a0"/><path d="M2.5 2.5 L13 13 M2.5 10 L9 16.5" stroke="#000" stroke-width="3.5"/><path d="M11 2 L30 21 M2 14 L14 26 M27 3 L16 14" stroke="#000" stroke-width="1"/><path d="M19 5 H25 L22 8Z" fill="#303030"/><path d="M19 14 L23 26" stroke="#e00010" stroke-width="1.8"/><path d="M18.5 13 Q25 12 30 17 L29 19 Q25 15 20 16Z" fill="#e00010"/><ellipse cx="21.5" cy="27" rx="4" ry="3" fill="#e00010"/><use href="#arr" x="0" y="21" width="11" height="11"/></svg>
<div class="lbl" style="left:74px;top:67px;width:90px">.STUDIO3</div>
<svg class="a" style="left:103px;top:108px" width="32" height="32" viewBox="0 0 32 32"><defs><radialGradient id="idm" cx=".25" cy=".45" r=".85"><stop offset="0" stop-color="#fff"/><stop offset=".3" stop-color="#e8f4ff"/><stop offset=".55" stop-color="#5090f0"/><stop offset="1" stop-color="#1830a8"/></radialGradient></defs><rect x="1" y="1" width="30" height="30" fill="url(#idm)"/><path d="M16 6 H31 M17 10 H31 M17 14 H31 M16 18 H31" stroke="#a8d0ff" stroke-width=".8" opacity=".6"/><path d="M10.5 3 V12" stroke="#5890d8" stroke-width="1.5"/><path d="M10.5 3 Q15 5 14 9" stroke="#5890d8" fill="none" stroke-width="1.5"/><ellipse cx="7" cy="12.5" rx="3.5" ry="2.5" fill="#5890d8"/><use href="#arr" x="0" y="21" width="11" height="11"/></svg>
<div class="lbl" style="left:74px;top:143px;width:90px">Domino</div>
<svg class="a" style="left:103px;top:184px" width="32" height="32" viewBox="0 0 32 32"><defs><linearGradient id="mqg" x1="0" y1="0" x2="1" y2="1"><stop offset="0" stop-color="#8890a0"/><stop offset="1" stop-color="#505860"/></linearGradient></defs><rect x="1" y="1" width="30" height="30" fill="url(#mqg)"/><circle cx="16" cy="16" r="12" fill="#404850" stroke="#c8d0d8" stroke-width="2"/><circle cx="16" cy="16" r="8" fill="#707880" stroke="#e0e8f0"/><path d="M12 21 L14 11 L20 13 L19 20" stroke="#d8d860" stroke-width="1.6" fill="none"/><use href="#arr" x="0" y="21" width="11" height="11"/></svg>
<div class="lbl" style="left:74px;top:219px;width:90px">musique</div>
<svg class="a" style="left:103px;top:260px" width="32" height="32" viewBox="0 0 32 32"><defs><linearGradient id="msg" x1="0" y1="0" x2="1" y2="1"><stop offset="0" stop-color="#f4f4f4"/><stop offset="1" stop-color="#a8a8a8"/></linearGradient></defs><rect x="1" y="3" width="30" height="26" fill="url(#msg)"/><rect x="1" y="0.5" width="30" height="2.5" fill="#1010c0"/><rect x="1" y="29" width="30" height="2.5" fill="#1010c0"/><text x="17" y="21" text-anchor="middle" font-family="Liberation Sans" font-size="11.5" font-weight="bold" fill="#fff" stroke="#000" stroke-width="2" paint-order="stroke" letter-spacing=".5">MSS</text><use href="#arr" x="0" y="21" width="11" height="11"/></svg>
<div class="lbl" style="left:74px;top:295px;width:90px">Music Studio<br>Independence</div>
<svg class="a" style="left:103px;top:336px" width="32" height="32" viewBox="0 0 32 32"><path d="M3 5.5 Q9 4 15 6.5 M17 6.5 Q23 4 30 4.5" stroke="#d83020" stroke-width="3" fill="none" stroke-linecap="round"/><path d="M16 6 V10" stroke="#60a0c0" stroke-width="1.5"/><path d="M4 25 Q4 10 16 10 Q28 10 29 25Z" fill="#3890e0"/><path d="M7 25 Q7 12 16 11 Q25 12 26 25Z" fill="#f8e840"/><path d="M13 25 Q13 11 16 11 Q19 11 19 25Z" fill="#f08020"/><path d="M3 24 Q16 29 31 24 L30 27 Q16 31 4 27Z" fill="#e8d040"/><path d="M16 26 Q24 27 30 24" stroke="#50b040" stroke-width="1.5" fill="none"/><use href="#arr" x="0" y="21" width="11" height="11"/></svg>
<div class="lbl" style="left:74px;top:371px;width:90px">Propeller Tool<br>v1.06</div>
<!-- TASKBAR -->
<div class="a face" style="left:0;top:0;width:1280px;height:29px;box-shadow:inset 0 -1px #505050"></div>
<div class="a raised" style="left:2px;top:2px;width:62px;height:22px"></div>
<svg class="a" style="left:4px;top:4px" width="17" height="16" viewBox="0 0 17 16">
 <path d="M1 2 L7 1 L7 7 L1 7.5Z" fill="#e8602a"/><path d="M8 1 L15 0 L15 6.5 L8 7Z" fill="#6ab82a"/>
 <path d="M1 8.5 L7 8 L7 14 L1 13.5Z" fill="#2a68d8"/><path d="M8 8 L15 7.5 L15 14.5 L8 14Z" fill="#f0c020"/></svg>
<svg class="a" style="left:22px;top:6px" width="40" height="13" viewBox="0 0 40 13" fill="none" stroke="#000" stroke-width="1.8">
 <path d="M1 2 H8 Q6 8 1 11 M5 7 L9 11"/><path d="M13 3 L16 1 H21 Q19 8 13 12 M14 5 L19 7"/><path d="M23 6 H33"/><path d="M35 1 V12 M35 5 L39 7"/></svg>
<div class="a" style="left:69px;top:2px;width:159px;height:22px;box-shadow:inset 1px 1px #404040,inset -1px -1px #fff,inset 2px 2px #808080;background:repeating-conic-gradient(#fff 0 25%,#d4d0c8 0 50%) 0 0/2px 2px"></div>
<svg class="a" style="left:74px;top:6px" width="16" height="14" viewBox="0 0 16 14"><path d="M1 1.5 H7 M9 1.5 H15" stroke="#e03030" stroke-width="1.5"/><path d="M8 2 V4" stroke="#404040"/><path d="M2 12 Q2 4 8 4 Q14 4 14 12Z" fill="#f0e040"/><path d="M6 12 Q6 5 8 4 Q10 5 10 12Z" fill="#f08020"/><path d="M2 12 Q2 8 4 6 L5 12Z" fill="#58b0e0"/><path d="M14 12 Q14 8 12 6 L11 12Z" fill="#60c060"/><path d="M1 12.5 H15" stroke="#40a040"/></svg>
<div class="t" style="left:94px;top:7px;font:bold 12.6px 'Liberation Sans';letter-spacing:0.2px">Propeller Tool</div>
<div class="a raised" style="left:231px;top:2px;width:161px;height:22px"></div>
<svg class="a" style="left:236px;top:5px" width="17" height="17" viewBox="0 0 32 32"><circle cx="17" cy="14.5" r="12.5" fill="url(#ffg)"/><path d="M3 9 Q1 20 8 27 Q15 32 24 29 Q30 26 31 19 Q27 23 20 23 Q13 23 12 16 Q12 10 16 6 Q9 2 6 6 L4 2 Q3 6 3 9Z" fill="url(#ffo)"/></svg>
<div class="t" style="left:256px;top:8px;font:11px 'Liberation Sans'">Yahoo!</div>
<svg class="a" style="left:290px;top:8px" width="29" height="12" viewBox="0 0 34 12" preserveAspectRatio="none" fill="none" stroke="#000" stroke-width="1.2"><path d="M2 3 L6 6 M8 1 Q6 8 1 11"/><path d="M12 6 H21"/><path d="M25 2 V7 Q25 10 23 11 M29 1 V11 L33 8"/></svg>
<div class="t" style="left:321px;top:8px;font:11px 'Liberation Sans';letter-spacing:-0.2px"> - Mozilla Fi...</div>
<div class="a raised" style="left:395px;top:2px;width:160px;height:22px"></div>
<svg class="a" style="left:399px;top:5px" width="16" height="16" viewBox="0 0 16 16"><rect x="1" y="1" width="7" height="5" fill="#e8e070" stroke="#807020" stroke-width="0.8"/><path d="M8 4 V15 M8 6 H14 M8 10 H14 M8 14 H14" stroke="#000" stroke-width="1.2"/><rect x="2" y="8" width="5" height="6" fill="#fff" stroke="#404040" stroke-width="0.8"/><rect x="11" y="5" width="4" height="2" fill="#307030"/><rect x="11" y="9" width="4" height="2" fill="#307030"/><rect x="11" y="13" width="4" height="2" fill="#307030"/></svg>
<div class="t" style="left:418px;top:8px;font:11px 'Liberation Sans';letter-spacing:-0.3px">Indy3 (172.16.65.34) - C...</div>
<div class="a" style="left:1087px;top:6px;width:17px;height:16px;background:#0a246a;color:#fff;font:11px 'Liberation Sans';text-align:center;line-height:16px">JP</div>
<div class="a" style="left:1108px;top:3px;width:2px;height:21px;box-shadow:inset 1px 0 #808080,inset -1px 0 #fff"></div>
<svg class="a" style="left:1114px;top:5px" width="18" height="18" viewBox="0 0 18 18"><circle cx="6.5" cy="7" r="5.5" fill="#e01010"/><circle cx="5" cy="5" r="1.8" fill="#ff9090"/><path d="M10 10 Q9 15 13 16 Q15 14 14 11" fill="#fff" stroke="#000" stroke-width="1.2"/><path d="M14 2 V9" stroke="#c06020" stroke-width="1.2"/></svg>
<svg class="a" style="left:1144px;top:6px" width="34" height="16" viewBox="0 0 34 16" fill="none" stroke="#000" stroke-width="1.2"><path d="M1 15 L4 2 H5 L8 15 M2 10 H7 M0 15 H3 M6 15 H9"/><path d="M15 3 H21 V14 M15 3 V14 M13 7 H22 M15 10 H21 M17 0 L18 3"/><path d="M24 2 H31 V6 Q31 7 33 7 M26 2 Q26 5 24 6 M24 9 H32 Q30 13 25 15 M26 10 Q28 13 33 15"/></svg>
<div class="a" style="left:1182px;top:2px;width:96px;height:24px;box-shadow:inset 1px 1px #808080,inset -1px -1px #fff"></div>
<svg class="a" style="left:1187px;top:9px" width="10" height="9" viewBox="0 0 10 9" fill="none" stroke="#000" stroke-width="1.6"><path d="M5 1 L1.5 4.5 L5 8 M9 1 L5.5 4.5 L9 8"/></svg>
<svg class="a" style="left:1199px;top:4px" width="18" height="18" viewBox="0 0 18 18"><circle cx="8" cy="8" r="6" fill="#909090"/><circle cx="8" cy="8" r="4" fill="#606060"/><circle cx="7" cy="7" r="2" fill="#d0d0d0"/><path d="M13 10 Q15 13 12 16 M15 9 Q18 13 14 17" stroke="#8080c0" fill="none"/></svg>
<div class="t" style="left:1226px;top:8px;font:11.5px 'Liberation Sans';letter-spacing:0px">1:51 PM</div>


<div class="a win" style="left:183px;top:49px;width:1036px;height:946px"></div>
<div class="a" style="left:187px;top:53px;width:1028px;height:18px;background:linear-gradient(to right,#808080,#c0c0c0)"></div>
<svg class="a" style="left:189px;top:54px" width="16" height="16"><use href="#prop"/></svg>
<div class="t" style="left:208px;top:55px;font:bold 13px Liberation Sans;color:#d8d4cc;letter-spacing:-0.1px">Propeller Tool - exp021</div>
<div class="a raised" style="left:1163px;top:55px;width:16px;height:14px"></div>
<div class="a raised" style="left:1179px;top:55px;width:16px;height:14px"></div>
<div class="a raised" style="left:1197px;top:55px;width:16px;height:14px"></div>
<div class="a" style="left:1167px;top:63px;width:6px;height:2px;background:#000"></div>
<div class="a" style="left:1182px;top:57px;width:9px;height:8px;border:1px solid #000;border-top-width:2px"></div>
<svg class="a" style="left:1200px;top:57px" width="10" height="9" viewBox="0 0 10 9"><path d="M1.5 1 L8 7.5 M8 1 L1.5 7.5" stroke="#000" stroke-width="1.6"/></svg>
<div class="t" style="left:194px;top:74px;font:12px Liberation Sans;color:#505050">File</div>
<div class="a" style="left:194px;top:85px;width:6px;height:1px;background:#606060"></div>
<div class="t" style="left:227px;top:74px;font:12px Liberation Sans;color:#505050">Edit</div>
<div class="a" style="left:227px;top:85px;width:6px;height:1px;background:#606060"></div>
<div class="t" style="left:261px;top:74px;font:12px Liberation Sans;color:#505050">Run</div>
<div class="a" style="left:261px;top:85px;width:6px;height:1px;background:#606060"></div>
<div class="t" style="left:295px;top:74px;font:12px Liberation Sans;color:#505050">Help</div>
<div class="a" style="left:295px;top:85px;width:6px;height:1px;background:#606060"></div>
<div class="a sunken" style="left:189px;top:93px;width:233px;height:196px;background:#fff"></div>
<div class="a" style="left:208px;top:95px;width:53px;height:17px;background:#d4d0c8"></div>
<svg class="a" style="left:192px;top:95px" width="16" height="16"><use href="#foldS"/></svg>
<div class="t" style="left:211px;top:96px;font:bold 13.5px Liberation Sans">exp021</div>
<div class="dotv" style="left:198px;top:111px;height:83px"></div>
<div class="dotv" style="left:217px;top:201px;height:29px"></div>
<div class="doth" style="left:199px;top:121px;width:11px"></div>
<svg class="a" style="left:211px;top:113px" width="16" height="16"><use href="#foldS"/></svg>
<div class="t" style="left:229px;top:114px;font:13px Liberation Sans;letter-spacing:0.1px">MidiIn03</div>
<div class="doth" style="left:199px;top:139px;width:11px"></div>
<svg class="a" style="left:211px;top:131px" width="16" height="16"><use href="#foldS"/></svg>
<div class="t" style="left:229px;top:132px;font:13px Liberation Sans;letter-spacing:0.1px">MidiOut01</div>
<div class="doth" style="left:199px;top:157px;width:11px"></div>
<svg class="a" style="left:211px;top:149px" width="16" height="16"><use href="#foldS"/></svg>
<div class="t" style="left:229px;top:150px;font:13px Liberation Sans;letter-spacing:0.1px">AudioOut06</div>
<div class="doth" style="left:199px;top:175px;width:11px"></div>
<svg class="a" style="left:211px;top:167px" width="16" height="16"><use href="#foldS"/></svg>
<div class="t" style="left:229px;top:168px;font:13px Liberation Sans;letter-spacing:0.1px">E_Numbers01</div>
<div class="doth" style="left:199px;top:193px;width:11px"></div>
<svg class="a" style="left:211px;top:185px" width="16" height="16"><use href="#foldS"/></svg>
<div class="t" style="left:229px;top:186px;font:13px Liberation Sans;letter-spacing:0.1px">E_TV_Terminal01</div>
<div class="doth" style="left:218px;top:211px;width:11px"></div>
<svg class="a" style="left:230px;top:203px" width="16" height="16"><use href="#foldS"/></svg>
<div class="t" style="left:248px;top:204px;font:13px Liberation Sans;letter-spacing:0.1px">E_TV01</div>
<div class="doth" style="left:218px;top:229px;width:11px"></div>
<svg class="a" style="left:230px;top:221px" width="16" height="16"><use href="#foldS"/></svg>
<div class="t" style="left:248px;top:222px;font:13px Liberation Sans;letter-spacing:0.1px">E_Graphics01</div>
<div class="a raised" style="left:190px;top:294px;width:21px;height:20px"></div>
<svg class="a" style="left:193px;top:297px" width="15" height="15" viewBox="0 0 15 15"><path d="M3 2 V12 H10 M3 7 H10" stroke="#404040" fill="none"/><circle cx="3" cy="2.5" r="1.8" fill="#e0e040" stroke="#606000" stroke-width=".6"/><circle cx="10.5" cy="7" r="1.8" fill="#e0e040" stroke="#606000" stroke-width=".6"/><circle cx="10.5" cy="12" r="1.8" fill="#e0e040" stroke="#606000" stroke-width=".6"/></svg>
<div class="a sunken" style="left:212px;top:293px;width:209px;height:21px;background:#fff"></div>
<div class="t" style="left:215px;top:298px;font:11.5px Liberation Sans;letter-spacing:-0.3px">C:\Propeller</div>
<div class="a raised" style="left:404px;top:295px;width:16px;height:17px"></div>
<svg class="a" style="left:408px;top:301px" width="8" height="5"><path d="M0 0 H7 L3.5 4Z" fill="#000"/></svg>
<div class="a sunken" style="left:189px;top:315px;width:233px;height:268px;background:#fff"></div>
<div class="a scr" style="left:404px;top:317px;width:16px;height:264px"></div>
<div class="a raised" style="left:404px;top:317px;width:16px;height:16px"></div>
<svg class="a" style="left:408px;top:322px" width="8" height="5"><path d="M3.5 0 L7 4 H0Z" fill="#000"/></svg>
<div class="dotv" style="left:198px;top:317px;height:249px"></div>
<div class="dotv" style="left:217px;top:317px;height:217px"></div>
<div class="dotv" style="left:236px;top:413px;height:73px"></div>
<div class="doth" style="left:217px;top:325px;width:10px"></div>
<div class="pm p" style="left:213px;top:321px"></div>
<svg class="a" style="left:227px;top:317px" width="16" height="16"><use href="#fold"/></svg>
<div class="t" style="left:250px;top:319px;font:11.5px Liberation Sans;letter-spacing:-0.45px">etc</div>
<div class="doth" style="left:217px;top:341px;width:10px"></div>
<svg class="a" style="left:227px;top:333px" width="16" height="16"><use href="#fold"/></svg>
<div class="t" style="left:250px;top:335px;font:11.5px Liberation Sans;letter-spacing:-0.45px">GUIDE</div>
<div class="doth" style="left:217px;top:357px;width:10px"></div>
<div class="pm p" style="left:213px;top:353px"></div>
<svg class="a" style="left:227px;top:349px" width="16" height="16"><use href="#fold"/></svg>
<div class="t" style="left:250px;top:351px;font:11.5px Liberation Sans;letter-spacing:-0.45px">i386</div>
<div class="doth" style="left:217px;top:373px;width:10px"></div>
<div class="pm p" style="left:213px;top:369px"></div>
<svg class="a" style="left:227px;top:365px" width="16" height="16"><use href="#fold"/></svg>
<div class="t" style="left:250px;top:367px;font:11.5px Liberation Sans;letter-spacing:-0.45px">processing-0135</div>
<div class="doth" style="left:217px;top:389px;width:10px"></div>
<div class="pm p" style="left:213px;top:385px"></div>
<svg class="a" style="left:227px;top:381px" width="16" height="16"><use href="#fold"/></svg>
<div class="t" style="left:250px;top:383px;font:11.5px Liberation Sans;letter-spacing:-0.45px">Program Files</div>
<div class="doth" style="left:217px;top:405px;width:10px"></div>
<div class="pm m" style="left:213px;top:401px"></div>
<svg class="a" style="left:227px;top:397px" width="16" height="16"><use href="#fold"/></svg>
<div class="a" style="left:248px;top:398px;width:49px;height:15px;background:#d4d0c8"></div>
<div class="t" style="left:250px;top:399px;font:11.5px Liberation Sans;letter-spacing:-0.45px">Propeller</div>
<div class="doth" style="left:236px;top:421px;width:10px"></div>
<svg class="a" style="left:246px;top:413px" width="16" height="16"><use href="#fold"/></svg>
<div class="t" style="left:269px;top:415px;font:11.5px Liberation Sans;letter-spacing:-0.45px">A</div>
<div class="doth" style="left:236px;top:437px;width:10px"></div>
<div class="pm p" style="left:232px;top:433px"></div>
<svg class="a" style="left:246px;top:429px" width="16" height="16"><use href="#fold"/></svg>
<div class="t" style="left:269px;top:431px;font:11.5px Liberation Sans;letter-spacing:-0.45px">C</div>
<div class="doth" style="left:236px;top:453px;width:10px"></div>
<div class="pm p" style="left:232px;top:449px"></div>
<svg class="a" style="left:246px;top:445px" width="16" height="16"><use href="#fold"/></svg>
<div class="t" style="left:269px;top:447px;font:11.5px Liberation Sans;letter-spacing:-0.45px">E</div>
<div class="doth" style="left:236px;top:469px;width:10px"></div>
<div class="pm p" style="left:232px;top:465px"></div>
<svg class="a" style="left:246px;top:461px" width="16" height="16"><use href="#fold"/></svg>
<div class="t" style="left:269px;top:463px;font:11.5px Liberation Sans;letter-spacing:-0.45px">L</div>
<div class="doth" style="left:236px;top:485px;width:10px"></div>
<div class="pm p" style="left:232px;top:481px"></div>
<svg class="a" style="left:246px;top:477px" width="16" height="16"><use href="#fold"/></svg>
<div class="t" style="left:269px;top:479px;font:11.5px Liberation Sans;letter-spacing:-0.45px">M</div>
<div class="doth" style="left:217px;top:501px;width:10px"></div>
<svg class="a" style="left:227px;top:493px" width="16" height="16"><use href="#fold"/></svg>
<div class="t" style="left:250px;top:495px;font:11.5px Liberation Sans;letter-spacing:-0.45px">SYSI</div>
<div class="doth" style="left:217px;top:517px;width:10px"></div>
<div class="pm p" style="left:213px;top:513px"></div>
<svg class="a" style="left:227px;top:509px" width="16" height="16"><use href="#fold"/></svg>
<div class="t" style="left:250px;top:511px;font:11.5px Liberation Sans;letter-spacing:-0.45px">VALU</div>
<div class="doth" style="left:217px;top:533px;width:10px"></div>
<div class="pm p" style="left:213px;top:529px"></div>
<svg class="a" style="left:227px;top:525px" width="16" height="16"><use href="#fold"/></svg>
<div class="t" style="left:250px;top:527px;font:11.5px Liberation Sans;letter-spacing:-0.45px">WIND</div>
<div class="doth" style="left:198px;top:549px;width:10px"></div>
<div class="pm p" style="left:194px;top:545px"></div>
<svg class="a" style="left:208px;top:541px" width="16" height="16" viewBox="0 0 16 16"><path d="M1 9 L4 5 H13 L15 9 V12 H1Z" fill="#c8c8c8" stroke="#707070"/><path d="M1 9 H15" stroke="#909090"/><rect x="11" y="10" width="2" height="1" fill="#40c040"/></svg>
<div class="t" style="left:231px;top:543px;font:11.5px Liberation Sans;letter-spacing:-0.45px">ACERDA</div>
<div class="doth" style="left:198px;top:565px;width:10px"></div>
<div class="pm p" style="left:194px;top:561px"></div>
<svg class="a" style="left:208px;top:557px" width="16" height="16" viewBox="0 0 16 16"><path d="M1 11 L4 8 H12 L15 11 V14 H1Z" fill="#c8c8c8" stroke="#707070"/><circle cx="8" cy="6" r="5" fill="#e0e0f0" stroke="#8080a0"/><circle cx="8" cy="6" r="1.5" fill="#a0a0c0"/></svg>
<div class="t" style="left:231px;top:559px;font:11.5px Liberation Sans;letter-spacing:-0.45px">(E:)</div>
<div class="a sunken" style="left:189px;top:587px;width:233px;height:360px;background:#fff"></div>
<div class="t" style="left:192px;top:591px;font:11.5px Liberation Sans;letter-spacing:-0.3px">AudioOut06.spin</div>
<div class="t" style="left:192px;top:607px;font:11.5px Liberation Sans;letter-spacing:-0.3px">E_Graphics01.spin</div>
<div class="t" style="left:192px;top:623px;font:11.5px Liberation Sans;letter-spacing:-0.3px">E_Numbers01.spin</div>
<div class="t" style="left:192px;top:639px;font:11.5px Liberation Sans;letter-spacing:-0.3px">E_TV_Terminal01.spin</div>
<div class="t" style="left:192px;top:655px;font:11.5px Liberation Sans;letter-spacing:-0.3px">E_TV01.spin</div>
<div class="a" style="left:191px;top:670px;width:61px;height:15px;background:#d4d0c8"></div>
<div class="t" style="left:192px;top:671px;font:11.5px Liberation Sans;letter-spacing:-0.3px">exp020.spin</div>
<div class="t" style="left:192px;top:687px;font:11.5px Liberation Sans;letter-spacing:-0.3px">exp021.spin</div>
<div class="t" style="left:192px;top:703px;font:11.5px Liberation Sans;letter-spacing:-0.3px">MidiIn03.spin</div>
<div class="t" style="left:192px;top:719px;font:11.5px Liberation Sans;letter-spacing:-0.3px">MidiOut01.spin</div>
<div class="t" style="left:192px;top:735px;font:11.5px Liberation Sans;letter-spacing:-0.3px">SingingDemo.spin</div>
<div class="t" style="left:192px;top:751px;font:11.5px Liberation Sans;letter-spacing:-0.3px">SingingDemoSeven.spin</div>
<div class="t" style="left:192px;top:767px;font:11.5px Liberation Sans;letter-spacing:-0.3px">StereoSpatializer.spin</div>
<div class="a sunken" style="left:189px;top:948px;width:232px;height:20px;background:#fff"></div>
<div class="t" style="left:192px;top:952px;font:11.5px Liberation Sans;letter-spacing:-0.5px">Propeller Source (*.spin)</div>
<div class="a raised" style="left:403px;top:950px;width:16px;height:16px"></div>
<svg class="a" style="left:407px;top:956px" width="8" height="5"><path d="M0 0 H7 L3.5 4Z" fill="#000"/></svg>
<div class="a" style="left:187px;top:974px;width:41px;height:17px;box-shadow:inset 1px 1px #808080,inset -1px -1px #fff"></div>
<div class="t" style="left:187px;top:975px;width:41px;text-align:center;font:10.5px Liberation Sans;letter-spacing:0.3px">28 : 20</div>
<div class="a" style="left:230px;top:974px;width:56px;height:17px;box-shadow:inset 1px 1px #808080,inset -1px -1px #fff"></div>
<div class="a" style="left:290px;top:974px;width:52px;height:17px;box-shadow:inset 1px 1px #808080,inset -1px -1px #fff"></div>
<div class="t" style="left:290px;top:975px;width:52px;text-align:center;font:10.5px Liberation Sans;letter-spacing:0.3px">Insert</div>
<div class="a" style="left:344px;top:974px;width:55px;height:17px;box-shadow:inset 1px 1px #808080,inset -1px -1px #fff"></div>
<div class="t" style="left:344px;top:975px;width:55px;text-align:center;font:10.5px Liberation Sans;letter-spacing:0.3px">Compiled</div>
<div class="a" style="left:401px;top:974px;width:120px;height:17px;box-shadow:inset 1px 1px #808080,inset -1px -1px #fff"></div>
<div class="t" style="left:401px;top:975px;width:120px;text-align:center;font:10.5px Liberation Sans;letter-spacing:0.3px">PUB Main  –  272 bytes</div>
<div class="a" style="left:524px;top:974px;width:691px;height:17px;box-shadow:inset 1px 1px #808080,inset -1px -1px #fff"></div>
<svg class="a" style="left:1202px;top:979px" width="13" height="13" viewBox="0 0 13 13"><path d="M12 1 L1 12 M12 5 L5 12 M12 9 L9 12" stroke="#fff"/><path d="M12 2 L2 12 M12 6 L6 12 M12 10 L10 12" stroke="#808080"/></svg>
<div class="a" style="left:424px;top:111px;width:791px;height:861px;box-shadow:inset 1px 1px #fff,inset -1px -1px #404040,inset -2px -2px #808080"></div>
<div class="a" style="left:424px;top:92px;width:58px;height:21px;background:linear-gradient(#fafaf6,#d4d0c8 80%);box-shadow:inset 1px 1px #fff,inset -1px 0 #404040,inset -2px 0 #808080"></div>
<div class="t" style="left:435px;top:94px;font:11.5px Liberation Sans;letter-spacing:-0.5px">exp021</div>
<div class="a" style="left:482px;top:93px;width:89px;height:18px;background:#d4d0c8;box-shadow:inset 1px 1px #fff,inset -1px 0 #404040,inset -2px 0 #808080"></div>
<div class="t" style="left:482px;top:97px;width:89px;text-align:center;font:11.5px Liberation Sans;letter-spacing:-0.5px">E_Graphics01</div>
<div class="a" style="left:571px;top:93px;width:59px;height:18px;background:#d4d0c8;box-shadow:inset 1px 1px #fff,inset -1px 0 #404040,inset -2px 0 #808080"></div>
<div class="t" style="left:571px;top:97px;width:59px;text-align:center;font:11.5px Liberation Sans;letter-spacing:-0.5px">E_TV01</div>
<div class="a" style="left:630px;top:93px;width:112px;height:18px;background:#d4d0c8;box-shadow:inset 1px 1px #fff,inset -1px 0 #404040,inset -2px 0 #808080"></div>
<div class="t" style="left:630px;top:97px;width:112px;text-align:center;font:11.5px Liberation Sans;letter-spacing:-0.5px">E_TV_Terminal01</div>
<div class="a" style="left:742px;top:93px;width:91px;height:18px;background:#d4d0c8;box-shadow:inset 1px 1px #fff,inset -1px 0 #404040,inset -2px 0 #808080"></div>
<div class="t" style="left:742px;top:97px;width:91px;text-align:center;font:11.5px Liberation Sans;letter-spacing:-0.5px">E_Numbers01</div>
<div class="a" style="left:425px;top:111px;width:54px;height:2px;background:#d4d0c8"></div>
<svg class="a" style="left:632px;top:118px" width="12" height="12" viewBox="0 0 12 12"><path d="M10.5 2.5 A5.5 5.5 0 0 0 1.5 9.5" stroke="#808080" fill="none"/><path d="M9.5 3 A4.5 4.5 0 0 0 2.5 9" stroke="#404040" fill="none"/><path d="M1.5 9.5 A5.5 5.5 0 0 0 10.5 2.5" stroke="#fff" fill="none"/><circle cx="6" cy="6" r="4" fill="#fff"/><circle cx="6" cy="6" r="2" fill="#000"/></svg>
<div class="t" style="left:650px;top:117px;font:12px Liberation Sans;letter-spacing:-0.6px">Full <u>S</u>ource</div>
<svg class="a" style="left:727px;top:118px" width="12" height="12" viewBox="0 0 12 12"><path d="M10.5 2.5 A5.5 5.5 0 0 0 1.5 9.5" stroke="#808080" fill="none"/><path d="M9.5 3 A4.5 4.5 0 0 0 2.5 9" stroke="#404040" fill="none"/><path d="M1.5 9.5 A5.5 5.5 0 0 0 10.5 2.5" stroke="#fff" fill="none"/><circle cx="6" cy="6" r="4" fill="#fff"/></svg>
<div class="t" style="left:745px;top:117px;font:12px Liberation Sans;letter-spacing:-0.6px"><u>C</u>ondensed</div>
<svg class="a" style="left:823px;top:118px" width="12" height="12" viewBox="0 0 12 12"><path d="M10.5 2.5 A5.5 5.5 0 0 0 1.5 9.5" stroke="#808080" fill="none"/><path d="M9.5 3 A4.5 4.5 0 0 0 2.5 9" stroke="#404040" fill="none"/><path d="M1.5 9.5 A5.5 5.5 0 0 0 10.5 2.5" stroke="#fff" fill="none"/><circle cx="6" cy="6" r="4" fill="#fff"/></svg>
<div class="t" style="left:841px;top:117px;font:12px Liberation Sans;letter-spacing:-0.6px">S<u>u</u>mmary</div>
<svg class="a" style="left:910px;top:118px" width="12" height="12" viewBox="0 0 12 12"><path d="M10.5 2.5 A5.5 5.5 0 0 0 1.5 9.5" stroke="#808080" fill="none"/><path d="M9.5 3 A4.5 4.5 0 0 0 2.5 9" stroke="#404040" fill="none"/><path d="M1.5 9.5 A5.5 5.5 0 0 0 10.5 2.5" stroke="#fff" fill="none"/><circle cx="6" cy="6" r="4" fill="#fff"/></svg>
<div class="t" style="left:928px;top:117px;font:12px Liberation Sans;letter-spacing:-0.6px"><u>D</u>ocumentation</div>
<div class="a raised" style="left:1193px;top:116px;width:16px;height:14px"></div>
<svg class="a" style="left:1197px;top:118px" width="9" height="9" viewBox="0 0 9 9"><path d="M1 1 L8 8 M8 1 L1 8" stroke="#000" stroke-width="1.6"/></svg>
<div class="a" style="left:427px;top:135px;width:784px;height:833px;box-shadow:inset 1px 1px #808080,inset 2px 2px #404040,inset -1px -1px #fff,inset -2px -2px #d4d0c8;background:#d4d0c8"></div>
<div class="a" style="left:429px;top:137px;width:19px;height:813px;background:#efefef"></div>
<div class="a" style="left:448px;top:137px;width:745px;height:813px;background:#000"></div>
<div class="t mono" style="left:429px;top:138px;width:15.5px;text-align:right;font-size:13px;line-height:13px;color:#808080;height:812px;overflow:hidden;letter-spacing:-0.8px">1<br>2<br>3<br>4<br>5<br>6<br>7<br>8<br>9<br>10<br>11<br>12<br>13<br>14<br>15<br>16<br>17<br>18<br>19<br>20<br>21<br>22<br>23</div>
<div class="t mono" style="left:451px;top:138px;font-size:13px;line-height:13px;color:#f4f468;transform:scaleX(0.8975);transform-origin:0 0">{{ exp021.spin }}<br><br>CON<br>  _clkmode = xtal1 + pll16x<br>  _xinfreq = 5_000_000<br><br>DAT<br>  f_number    long      1294309430,1371273070,1452813200,1539201960<br>              long      1630727660,1727695770,1830429900,1939272920<br>              long      2054588080,2176760240,2306197130,2443330740<br><br>OBJ<br>  midiIn : &quot;MidiIn03&quot;<br>  midiOut : &quot;MidiOut01&quot;<br>  audio : &quot;AudioOut06&quot;<br>  Num : &quot;E_Numbers01&quot;<br>  TV : &quot;E_TV_Terminal01&quot;<br><br>PUB Main | dummy, para, p1<br>  Num.Init { Num.Init MUST be called before first object use. }<br>  TV.Start(12)<br>  TV.Out(0)<br></div>
<div class="a scr" style="left:1193px;top:137px;width:16px;height:813px"></div>
<div class="a raised" style="left:1193px;top:137px;width:16px;height:16px"></div>
<svg class="a" style="left:1197px;top:142px" width="8" height="5"><path d="M3.5 0 L7 4 H0Z" fill="#000"/></svg>
<div class="a raised" style="left:1193px;top:153px;width:16px;height:770px"></div>
<div class="a raised" style="left:1193px;top:934px;width:16px;height:16px"></div>
<svg class="a" style="left:1197px;top:940px" width="8" height="5"><path d="M0 0 H7 L3.5 4Z" fill="#000"/></svg>
<div class="a scr" style="left:429px;top:950px;width:764px;height:16px"></div>
<div class="a raised" style="left:429px;top:950px;width:16px;height:16px"></div>
<svg class="a" style="left:434px;top:954px" width="5" height="8"><path d="M0 3.5 L4 0 V7Z" fill="#000"/></svg>
<div class="a raised" style="left:445px;top:950px;width:302px;height:16px"></div>
<div class="a raised" style="left:1177px;top:950px;width:16px;height:16px"></div>
<svg class="a" style="left:1183px;top:954px" width="5" height="8"><path d="M4 3.5 L0 0 V7Z" fill="#000"/></svg>
<div class="a" style="left:1193px;top:950px;width:16px;height:16px;background:#d4d0c8"></div>
<div class="a" style="left:274px;top:411px;width:875px;height:504px;background:#d4d0c8;box-shadow:inset -1px -1px #404040,inset 1px 1px #d4d0c8,inset -2px -2px #808080,inset 2px 2px #fff"></div>
<div class="a" style="left:277px;top:414px;width:869px;height:18px;background:linear-gradient(to right,#0a246a,#a6caf0)"></div>
<svg class="a" style="left:279px;top:415px" width="16" height="16"><use href="#prop"/></svg>
<div class="t" style="left:297px;top:415.5px;font:bold 13px Liberation Sans;color:#fff;letter-spacing:-0.2px">Object Info</div>
<div class="a raised" style="left:1128px;top:416px;width:16px;height:14px"></div>
<svg class="a" style="left:1132px;top:418px" width="9" height="9" viewBox="0 0 9 9"><path d="M1 1 L8 8 M8 1 L1 8" stroke="#000" stroke-width="1.6"/></svg>
<div class="a" style="left:285px;top:441px;width:313px;height:160px;box-shadow:inset 1px 1px #fff,inset -1px -1px #808080"></div>
<div class="a sunken" style="left:292px;top:447px;width:300px;height:148px;background:#fff"></div>
<div class="a" style="left:312px;top:449px;width:43px;height:16px;background:#0a246a"></div>
<svg class="a" style="left:296px;top:449px" width="16" height="16"><use href="#foldS"/></svg>
<div class="t" style="left:314px;top:451px;font:bold 12px Liberation Sans;color:#fff">exp021</div>
<div class="dotv" style="left:301px;top:465px;height:72px"></div>
<div class="dotv" style="left:320px;top:545px;height:24px"></div>
<div class="doth" style="left:302px;top:473px;width:11px"></div>
<svg class="a" style="left:314px;top:465px" width="16" height="16"><use href="#foldS"/></svg>
<div class="t" style="left:332px;top:467px;font:11.5px Liberation Sans;letter-spacing:-0.3px">MidiIn03</div>
<div class="doth" style="left:302px;top:489px;width:11px"></div>
<svg class="a" style="left:314px;top:481px" width="16" height="16"><use href="#foldS"/></svg>
<div class="t" style="left:332px;top:483px;font:11.5px Liberation Sans;letter-spacing:-0.3px">MidiOut01</div>
<div class="doth" style="left:302px;top:505px;width:11px"></div>
<svg class="a" style="left:314px;top:497px" width="16" height="16"><use href="#foldS"/></svg>
<div class="t" style="left:332px;top:499px;font:11.5px Liberation Sans;letter-spacing:-0.3px">AudioOut06</div>
<div class="doth" style="left:302px;top:521px;width:11px"></div>
<svg class="a" style="left:314px;top:513px" width="16" height="16"><use href="#foldS"/></svg>
<div class="t" style="left:332px;top:515px;font:11.5px Liberation Sans;letter-spacing:-0.3px">E_Numbers01</div>
<div class="doth" style="left:302px;top:537px;width:11px"></div>
<svg class="a" style="left:314px;top:529px" width="16" height="16"><use href="#foldS"/></svg>
<div class="t" style="left:332px;top:531px;font:11.5px Liberation Sans;letter-spacing:-0.3px">E_TV_Terminal01</div>
<div class="doth" style="left:321px;top:553px;width:11px"></div>
<svg class="a" style="left:333px;top:545px" width="16" height="16"><use href="#foldS"/></svg>
<div class="t" style="left:351px;top:547px;font:11.5px Liberation Sans;letter-spacing:-0.3px">E_TV01</div>
<div class="doth" style="left:321px;top:569px;width:11px"></div>
<svg class="a" style="left:333px;top:561px" width="16" height="16"><use href="#foldS"/></svg>
<div class="t" style="left:351px;top:563px;font:11.5px Liberation Sans;letter-spacing:-0.3px">E_Graphics01</div>
<div class="a" style="left:285px;top:609px;width:313px;height:158px;box-shadow:inset 1px 1px #fff,inset -1px -1px #808080"></div>
<div class="t" style="left:301px;top:625px;font:bold 11.5px Liberation Sans;letter-spacing:0.6px">$0010</div>
<div class="t" style="left:394px;top:620px;font:17.5px Liberation Sans;letter-spacing:0px">RAM Usage</div>
<div class="t" style="left:547px;top:625px;font:bold 11.5px Liberation Sans;letter-spacing:0.2px">$7FFF</div>
<div class="a" style="left:301px;top:649px;width:281px;height:25px;box-shadow:inset 1px 1px #808080,inset -1px -1px #fff"></div>
<div class="a" style="left:302px;top:650px;width:54px;height:23px;background:#ff7070"></div>
<div class="a" style="left:356px;top:650px;width:125px;height:23px;background:#ffff70"></div>
<div class="a" style="left:481px;top:650px;width:100px;height:23px;background:#7070ff"></div>
<div class="t" style="left:300px;top:689px;font:14px Liberation Sans;letter-spacing:0.5px;-webkit-text-stroke:0.5px #000">Program :</div>
<div class="t" style="left:396px;top:689px;width:120px;text-align:right;font:14px Liberation Sans;letter-spacing:0.25px;-webkit-text-stroke:0.5px #000">1,607 Longs</div>
<div class="a" style="left:557px;top:689px;width:25px;height:17px;background:#ff7070;box-shadow:inset 1px 1px #808080,inset -1px -1px #fff"></div>
<div class="t" style="left:300px;top:713px;font:14px Liberation Sans;letter-spacing:0.5px;-webkit-text-stroke:0.5px #000">Variable :</div>
<div class="t" style="left:396px;top:713px;width:120px;text-align:right;font:14px Liberation Sans;letter-spacing:0.25px;-webkit-text-stroke:0.5px #000">3,654 Longs</div>
<div class="a" style="left:557px;top:713px;width:25px;height:17px;background:#ffff70;box-shadow:inset 1px 1px #808080,inset -1px -1px #fff"></div>
<div class="t" style="left:300px;top:737px;font:14px Liberation Sans;letter-spacing:0.5px;-webkit-text-stroke:0.5px #000">Stack / Free :</div>
<div class="t" style="left:396px;top:737px;width:120px;text-align:right;font:14px Liberation Sans;letter-spacing:0.25px;-webkit-text-stroke:0.5px #000">2,927 Longs</div>
<div class="a" style="left:557px;top:737px;width:25px;height:17px;background:#7070ff;box-shadow:inset 1px 1px #808080,inset -1px -1px #fff"></div>
<div class="a" style="left:285px;top:775px;width:313px;height:96px;box-shadow:inset 1px 1px #fff,inset -1px -1px #808080"></div>
<div class="t" style="left:300px;top:791px;font:14px Liberation Sans;letter-spacing:0.5px;-webkit-text-stroke:0.5px #000">Clock Mode :</div>
<div class="t" style="left:400px;top:791px;width:182px;text-align:right;font:14px Liberation Sans;letter-spacing:0.25px;-webkit-text-stroke:0.5px #000">XTAL1 + PLL16X</div>
<div class="t" style="left:300px;top:815px;font:14px Liberation Sans;letter-spacing:0.5px;-webkit-text-stroke:0.5px #000">Clock Freq :</div>
<div class="t" style="left:400px;top:815px;width:182px;text-align:right;font:14px Liberation Sans;letter-spacing:0.25px;-webkit-text-stroke:0.5px #000">80,000,000 Hz</div>
<div class="t" style="left:300px;top:839px;font:14px Liberation Sans;letter-spacing:0.5px;-webkit-text-stroke:0.5px #000">XIN Freq :</div>
<div class="t" style="left:400px;top:839px;width:182px;text-align:right;font:14px Liberation Sans;letter-spacing:0.25px;-webkit-text-stroke:0.5px #000">5,000,000 Hz</div>
<div class="a" style="left:323px;top:879px;width:102px;height:25px;background:#d4d0c8;border:1px solid #000;box-shadow:inset -1px -1px #404040,inset 1px 1px #fff,inset -2px -2px #808080"></div><div class="t" style="left:323px;top:885px;width:102px;text-align:center;font:11.5px Liberation Sans;letter-spacing:-0.4px"><u>C</u>lose</div>
<div class="a btn" style="left:458px;top:879px;width:102px;height:25px"></div><div class="t" style="left:458px;top:885px;width:102px;text-align:center;font:11.5px Liberation Sans;letter-spacing:-0.4px">Hide <u>H</u>ex</div>
<div class="a btn" style="left:617px;top:879px;width:89px;height:25px"></div><div class="t" style="left:617px;top:885px;width:89px;text-align:center;font:11.5px Liberation Sans;letter-spacing:-0.4px">Load <u>R</u>AM</div>
<div class="a btn" style="left:721px;top:879px;width:89px;height:25px"></div><div class="t" style="left:721px;top:885px;width:89px;text-align:center;font:11.5px Liberation Sans;letter-spacing:-0.4px">Load <u>E</u>EPROM</div>
<div class="a btn" style="left:825px;top:879px;width:89px;height:25px"></div><div class="t" style="left:825px;top:885px;width:89px;text-align:center;font:11.5px Liberation Sans;letter-spacing:-0.4px"><u>O</u>pen File</div>
<div class="a btn" style="left:929px;top:879px;width:89px;height:25px"></div><div class="t" style="left:929px;top:885px;width:89px;text-align:center;font:11.5px Liberation Sans;letter-spacing:-0.4px">Save <u>B</u>inary File</div>
<div class="a btn" style="left:1033px;top:879px;width:105px;height:25px"></div><div class="t" style="left:1033px;top:885px;width:105px;text-align:center;font:11.5px Liberation Sans;letter-spacing:-0.4px">Save EEPROM <u>F</u>ile</div>
<div class="a" style="left:606px;top:441px;width:2px;height:430px;box-shadow:inset 1px 0 #808080,inset -1px 0 #fff"></div>
<div class="a" style="left:617px;top:441px;width:521px;height:430px;box-shadow:inset 1px 1px #fff,inset -1px -1px #808080"></div>
<div class="a" style="left:656px;top:447px;width:333px;height:417px;background:#ff8a8e;box-shadow:inset 1px 1px #808080"></div>
<div class="a" style="left:657px;top:448px;width:332px;height:13px;background:#d4d0c8"></div>
<div class="a" style="left:994px;top:447px;width:116px;height:417px;background:#ff8a8e;box-shadow:inset 1px 1px #808080"></div>
<div class="a" style="left:995px;top:448px;width:115px;height:13px;background:#d4d0c8"></div>
<div class="t mono" style="left:624px;top:449px;font-size:13px;line-height:13px;transform:scaleX(0.8975);transform-origin:0 0">0000<br>0010<br>0020<br>0030<br>0040<br>0050<br>0060<br>0070<br>0080<br>0090<br>00A0<br>00B0<br>00C0<br>00D0<br>00E0<br>00F0<br>0100<br>0110<br>0120<br>0130<br>0140<br>0150<br>0160<br>0170<br>0180<br>0190<br>01A0<br>01B0<br>01C0<br>01D0<br>01E0<br>01F0</div>
<div class="t mono" style="left:659px;top:449px;font-size:13px;line-height:13px;transform:scaleX(0.8975);transform-origin:0 0">00 B4 C4 04 6F 44 10 00 2C 19 4C 52 5C 00 5C 52<br>5C 01 02 05 4C 00 0C 00 5C 01 00 00 B8 02 08 01<br>C4 03 10 02 D4 04 24 02 70 06 6C 02 36 98 25 4D<br>6E F7 BB 51 90 2B 98 56 A8 5B BE 5B EC ED 32 61<br>9A 8B FA 66 CC 24 1A 6D D8 F4 96 73 B0 86 76 7A<br>B0 B9 BE 81 8A C6 75 89 B4 44 A2 91 01 06 05 01<br>01 38 0C 06 06 01 01 87 81 22 06 06 03 00 37 22<br>06 02 01 65 01 00 64 38 0A 06 05 03 06 06 03 01<br>87 81 33 06 06 03 00 38 06 06 03 01 65 01 00 64<br>38 0A 06 05 03 06 06 03 01 87 81 47 06 06 03 00<br>38 0A 38 0B 06 04 01 65 01 00 64 38 0A 06 05 03<br>06 06 03 00 06 02 02 65 64 34 FB 0A 80 70 01 64<br>06 03 02 01 00 64 38 F0 06 05 03 06 06 03 64 3A<br>FF 00 FF E8 3A 90 00 64 FC 0A 27 01 35 06 04 03<br>64 39 7F 00 E8 37 02 E2 6D 6C 37 01 EC 38 0C F7<br>D4 1C 37 26 6C ED 38 0C F6 E2 69 01 68 06 04 02<br>04 2C 64 3A FF 00 FF E8 3A 90 00 00 FC 0A 08 01<br>37 22 06 04 03 04 17 64 3A FF FF 00 E8 3A B0 00<br>00 FC 0A 0A 64 37 22 E8 69 01 68 06 04 03 04 FF<br>82 32 4D 49 44 49 5F 69 6E 70 75 74 5F 43 6F 67<br>20 3D 00 2C 20 4D 49 44 49 5F 6F 75 74 70 75 74<br>5F 43 6F 67 20 3D 00 2C 20 41 75 64 69 6F 5F 6F<br>75 74 70 75 74 5F 43 6F 67 20 3D 00 5C 01 03 00<br>18 01 00 00 46 01 00 00 01 68 FC A0 39 68 BC 2C<br>34 68 3C F0 F1 6D BC A0 38 6C BC 80 37 6C BC 80<br>09 6A FC A0 37 6C BC F8 F2 69 3C 61 01 7A FC 30<br>07 6A FC E4 17 7A FC 28 FF 7A FC 6C FF 7A FC 60<br>80 7A 7C 62 17 00 68 5C 3D 66 BC A0 F0 66 FC 60<br>F0 66 7C 86 02 00 68 5C 3D 80 BC A0 00 82 FC A0<br>02 00 7C 5C 40 66 BC A0 E0 66 FC 60 C0 66 7C 86<br>1F 00 68 5C 23 82 7C E8 01 82 FC 80 3D 84 BC A0<br>02 00 7C 5C 40 7E BC A0 10 7E FC 2C 3D 7E BC 68</div>
<div class="t mono" style="left:996px;top:449px;font-size:13px;line-height:13px;transform:scaleX(0.8975);transform-origin:0 0"> Initialization<br>\   L   \   π   <br>Ä ∆ Ô $ p l 6‡%M<br>n÷→Q─+‡V¨[∞[ìí2a<br>·─úfÌ$◄mØô┴s°åvz<br>°¹∞ñ┴Æu‰´D¢¯    <br> 8     ▪ñ&quot;    7&quot;<br>   e  d8¦       <br>▪ñ3    8    e  d<br>8¦       ▪ñG    <br>8¦8┐   e  d8¦   <br>       ed4û¦ðp d<br>     d8ð      d:<br>ÿ ÿè:─ dü¦&#x27; 5   <br>d9▓ è7 âml7 ì8 ÷<br>Ô┤7&amp;lí8 öâi h   <br> ,d:ÿ ÿè:─  ü¦  <br>7&quot;    γd:ÿÿ è:° <br> ü¦¦d7&quot;èi h    ÿ<br>/2MIDI_input_Cog<br> = , MIDI_output<br>_Cog = , Audio_o<br>utput_Cog = \   <br>↓   F    hü↑9h ,<br>4h&lt;ðñm ↑8l ð7l ð<br>┐jü↑7l øòi&lt;a zü0<br> jüäγzü(ÿzülÿzü`<br>ðz|bγ h\=f ↑ðfü`<br>ðf|å  h\=ð ↑ /ü↑<br>  |\@f ↑àfü`Àf|å<br>└ h\#/|è /üð=⌐ ↑<br>  |\@~ ↑∆~ü,=~ h</div>
<svg class="a" style="left:996px;top:449px" width="112" height="416"><g transform="translate(7,13)"><path d="M6.5 1H1.5V12.5H6.5" stroke="#000" fill="none"/></g><g transform="translate(14,13)"><path d="M1 7H6.5" stroke="#000" stroke-width="1.4"/><path d="M.5 7L3.5 4V10Z" fill="#000"/></g><g transform="translate(21,13)"><path d="M3.5 2V10" stroke="#000" stroke-width="1.4"/><path d="M3.5 10.5L.5 7.5H6.5Z" fill="#000"/></g><g transform="translate(35,13)"><path d="M.5 .5V13M.5 1H7" stroke="#000" fill="none"/><path d="M1.5 3H5.5L1.5 7L5.5 11H1.5Z" fill="#000"/></g><g transform="translate(42,13)"><path d="M1 5.5H6M1 8.5H6" stroke="#000"/></g><g transform="translate(49,13)"><path d="M.5 .5V13M.5 1H7" stroke="#000" fill="none"/><path d="M1.5 3H5.5L1.5 7L5.5 11H1.5Z" fill="#000"/></g><g transform="translate(63,13)"><path d="M6.5 1H1.5V12.5H6.5" stroke="#000" fill="none"/></g><g transform="translate(70,13)"><path d="M.5 .5V13M.5 1H7" stroke="#000" fill="none"/><path d="M1.5 3H5.5L1.5 7L5.5 11H1.5Z" fill="#000"/></g><g transform="translate(77,13)"><path d="M.5 .5V13M.5 1H7" stroke="#000" fill="none"/><path d="M1.5 3H5.5L1.5 7L5.5 11H1.5Z" fill="#000"/></g><g transform="translate(91,13)"><path d="M1 7H6.5" stroke="#000" stroke-width="1.4"/><path d="M.5 7L3.5 4V10Z" fill="#000"/></g><g transform="translate(98,13)"><path d="M.5 1H5.5V12.5H.5" stroke="#000" fill="none"/></g><g transform="translate(105,13)"><path d="M6.5 1H1.5V12.5H6.5" stroke="#000" fill="none"/></g><g transform="translate(7,26)"><path d="M.5 7H6" stroke="#000" stroke-width="1.4"/><path d="M6.5 7L3.5 4V10Z" fill="#000"/></g><g transform="translate(21,26)"><path d="M1 7H6.5" stroke="#000" stroke-width="1.4"/><path d="M.5 7L3.5 4V10Z" fill="#000"/></g><g transform="translate(35,26)"><path d="M3.5 3V11" stroke="#000" stroke-width="1.4"/><path d="M3.5 2.5L.5 5.5H6.5Z" fill="#000"/></g><g transform="translate(49,26)"><path d="M1 7H6.5" stroke="#000" stroke-width="1.4"/><path d="M.5 7L3.5 4V10Z" fill="#000"/></g><g transform="translate(63,26)"><path d="M.5 7L5.5 3V11Z" fill="#000"/></g><g transform="translate(77,26)"><path d="M1 7H6.5" stroke="#000" stroke-width="1.4"/><path d="M.5 7L3.5 4V10Z" fill="#000"/></g><g transform="translate(84,65)"><path d="M6.5 1H1.5V12.5H6.5" stroke="#000" fill="none"/></g><g transform="translate(91,65)"><path d="M.5 7L5.5 3V11Z" fill="#000"/></g><g transform="translate(98,65)"><path d="M3.5 2V10" stroke="#000" stroke-width="1.4"/><path d="M3.5 10.5L.5 7.5H6.5Z" fill="#000"/></g><g transform="translate(105,65)"><path d="M6.5 1H1.5V12.5H6.5" stroke="#000" fill="none"/></g><g transform="translate(0,78)"><path d="M6.5 1H1.5V12.5H6.5" stroke="#000" fill="none"/></g><g transform="translate(14,78)"><path d="M1 5.5H6M1 8.5H6" stroke="#000"/></g><g transform="translate(21,78)"><path d="M.5 7L5.5 3V11Z" fill="#000"/></g><g transform="translate(28,78)"><path d="M.5 7L5.5 3V11Z" fill="#000"/></g><g transform="translate(35,78)"><path d="M6.5 1H1.5V12.5H6.5" stroke="#000" fill="none"/></g><g transform="translate(42,78)"><path d="M6.5 1H1.5V12.5H6.5" stroke="#000" fill="none"/></g><g transform="translate(70,78)"><path d="M.5 7L5.5 3V11Z" fill="#000"/></g><g transform="translate(77,78)"><path d="M.5 7L5.5 3V11Z" fill="#000"/></g><g transform="translate(84,78)"><path d="M.5 7H6" stroke="#000" stroke-width="1.4"/><path d="M6.5 7L3.5 4V10Z" fill="#000"/></g><g transform="translate(91,78)"><path d="M.5 .5V13M.5 1H7" stroke="#000" fill="none"/><path d="M1.5 3H5.5L1.5 7L5.5 11H1.5Z" fill="#000"/></g><g transform="translate(0,91)"><path d="M.5 7L5.5 3V11Z" fill="#000"/></g><g transform="translate(7,91)"><path d="M1 7H6.5" stroke="#000" stroke-width="1.4"/><path d="M.5 7L3.5 4V10Z" fill="#000"/></g><g transform="translate(14,91)"><path d="M6.5 1H1.5V12.5H6.5" stroke="#000" fill="none"/></g><g transform="translate(28,91)"><path d="M6.5 1H1.5V12.5H6.5" stroke="#000" fill="none"/></g><g transform="translate(35,91)"><path d="M.5 .5V13M.5 1H7" stroke="#000" fill="none"/><path d="M1.5 3H5.5L1.5 7L5.5 11H1.5Z" fill="#000"/></g><g transform="translate(63,91)"><path d="M.5 7L5.5 3V11Z" fill="#000"/></g><g transform="translate(70,91)"><path d="M3.5 2V10" stroke="#000" stroke-width="1.4"/><path d="M3.5 10.5L.5 7.5H6.5Z" fill="#000"/></g><g transform="translate(77,91)"><path d="M.5 7H6" stroke="#000" stroke-width="1.4"/><path d="M6.5 7L3.5 4V10Z" fill="#000"/></g><g transform="translate(84,91)"><path d="M.5 7L5.5 3V11Z" fill="#000"/></g><g transform="translate(91,91)"><path d="M.5 7L5.5 3V11Z" fill="#000"/></g><g transform="translate(98,91)"><path d="M.5 7H6" stroke="#000" stroke-width="1.4"/><path d="M6.5 7L3.5 4V10Z" fill="#000"/></g><g transform="translate(105,91)"><path d="M6.5 1H1.5V12.5H6.5" stroke="#000" fill="none"/></g><g transform="translate(21,104)"><path d="M.5 7L5.5 3V11Z" fill="#000"/></g><g transform="translate(28,104)"><path d="M.5 7L5.5 3V11Z" fill="#000"/></g><g transform="translate(35,104)"><path d="M.5 7H6" stroke="#000" stroke-width="1.4"/><path d="M6.5 7L3.5 4V10Z" fill="#000"/></g><g transform="translate(42,104)"><path d="M.5 .5V13M.5 1H7" stroke="#000" fill="none"/><path d="M1.5 3H5.5L1.5 7L5.5 11H1.5Z" fill="#000"/></g><g transform="translate(56,104)"><path d="M.5 7L5.5 3V11Z" fill="#000"/></g><g transform="translate(63,104)"><path d="M.5 7L5.5 3V11Z" fill="#000"/></g><g transform="translate(70,104)"><path d="M.5 7H6" stroke="#000" stroke-width="1.4"/><path d="M6.5 7L3.5 4V10Z" fill="#000"/></g><g transform="translate(77,104)"><path d="M6.5 1H1.5V12.5H6.5" stroke="#000" fill="none"/></g><g transform="translate(91,104)"><path d="M6.5 1H1.5V12.5H6.5" stroke="#000" fill="none"/></g><g transform="translate(98,104)"><path d="M.5 .5V13M.5 1H7" stroke="#000" fill="none"/><path d="M1.5 3H5.5L1.5 7L5.5 11H1.5Z" fill="#000"/></g><g transform="translate(14,117)"><path d="M.5 7L5.5 3V11Z" fill="#000"/></g><g transform="translate(21,117)"><path d="M3.5 2V10" stroke="#000" stroke-width="1.4"/><path d="M3.5 10.5L.5 7.5H6.5Z" fill="#000"/></g><g transform="translate(28,117)"><path d="M.5 7H6" stroke="#000" stroke-width="1.4"/><path d="M6.5 7L3.5 4V10Z" fill="#000"/></g><g transform="translate(35,117)"><path d="M.5 7L5.5 3V11Z" fill="#000"/></g><g transform="translate(42,117)"><path d="M.5 7L5.5 3V11Z" fill="#000"/></g><g transform="translate(49,117)"><path d="M.5 7H6" stroke="#000" stroke-width="1.4"/><path d="M6.5 7L3.5 4V10Z" fill="#000"/></g><g transform="translate(56,117)"><path d="M6.5 1H1.5V12.5H6.5" stroke="#000" fill="none"/></g><g transform="translate(84,117)"><path d="M.5 7L5.5 3V11Z" fill="#000"/></g><g transform="translate(91,117)"><path d="M.5 7L5.5 3V11Z" fill="#000"/></g><g transform="translate(98,117)"><path d="M.5 7H6" stroke="#000" stroke-width="1.4"/><path d="M6.5 7L3.5 4V10Z" fill="#000"/></g><g transform="translate(105,117)"><path d="M.5 .5V13M.5 1H7" stroke="#000" fill="none"/><path d="M1.5 3H5.5L1.5 7L5.5 11H1.5Z" fill="#000"/></g><g transform="translate(28,130)"><path d="M.5 7L5.5 3V11Z" fill="#000"/></g><g transform="translate(35,130)"><path d="M3.5 3V11" stroke="#000" stroke-width="1.4"/><path d="M3.5 2.5L.5 5.5H6.5Z" fill="#000"/></g><g transform="translate(42,130)"><path d="M6.5 1H1.5V12.5H6.5" stroke="#000" fill="none"/></g><g transform="translate(56,130)"><path d="M6.5 1H1.5V12.5H6.5" stroke="#000" fill="none"/></g><g transform="translate(63,130)"><path d="M.5 .5V13M.5 1H7" stroke="#000" fill="none"/><path d="M1.5 3H5.5L1.5 7L5.5 11H1.5Z" fill="#000"/></g><g transform="translate(91,130)"><path d="M.5 7L5.5 3V11Z" fill="#000"/></g><g transform="translate(98,130)"><path d="M3.5 2V10" stroke="#000" stroke-width="1.4"/><path d="M3.5 10.5L.5 7.5H6.5Z" fill="#000"/></g><g transform="translate(105,130)"><path d="M.5 7H6" stroke="#000" stroke-width="1.4"/><path d="M6.5 7L3.5 4V10Z" fill="#000"/></g><g transform="translate(0,143)"><path d="M.5 7L5.5 3V11Z" fill="#000"/></g><g transform="translate(7,143)"><path d="M.5 7L5.5 3V11Z" fill="#000"/></g><g transform="translate(14,143)"><path d="M.5 7H6" stroke="#000" stroke-width="1.4"/><path d="M6.5 7L3.5 4V10Z" fill="#000"/></g><g transform="translate(21,143)"><path d="M.5 .5V13M.5 1H7" stroke="#000" fill="none"/><path d="M1.5 3H5.5L1.5 7L5.5 11H1.5Z" fill="#000"/></g><g transform="translate(28,143)"><path d="M.5 7L5.5 3V11Z" fill="#000"/></g><g transform="translate(35,143)"><path d="M1 7H6.5" stroke="#000" stroke-width="1.4"/><path d="M.5 7L3.5 4V10Z" fill="#000"/></g><g transform="translate(42,143)"><path d="M1 7H6.5" stroke="#000" stroke-width="1.4"/><path d="M.5 7L3.5 4V10Z" fill="#000"/></g><g transform="translate(98,143)"><path d="M6.5 1H1.5V12.5H6.5" stroke="#000" fill="none"/></g><g transform="translate(0,156)"><path d="M.5 7L5.5 3V11Z" fill="#000"/></g><g transform="translate(7,156)"><path d="M.5 7H6" stroke="#000" stroke-width="1.4"/><path d="M6.5 7L3.5 4V10Z" fill="#000"/></g><g transform="translate(14,156)"><path d="M1 7H6.5" stroke="#000" stroke-width="1.4"/><path d="M.5 7L3.5 4V10Z" fill="#000"/></g><g transform="translate(21,156)"><path d="M6.5 1H1.5V12.5H6.5" stroke="#000" fill="none"/></g><g transform="translate(28,156)"><path d="M.5 .5V13M.5 1H7" stroke="#000" fill="none"/><path d="M1.5 3H5.5L1.5 7L5.5 11H1.5Z" fill="#000"/></g><g transform="translate(56,156)"><path d="M.5 7L5.5 3V11Z" fill="#000"/></g><g transform="translate(63,156)"><path d="M3.5 2V10" stroke="#000" stroke-width="1.4"/><path d="M3.5 10.5L.5 7.5H6.5Z" fill="#000"/></g><g transform="translate(70,156)"><path d="M.5 7H6" stroke="#000" stroke-width="1.4"/><path d="M6.5 7L3.5 4V10Z" fill="#000"/></g><g transform="translate(77,156)"><path d="M.5 7L5.5 3V11Z" fill="#000"/></g><g transform="translate(84,156)"><path d="M.5 7L5.5 3V11Z" fill="#000"/></g><g transform="translate(91,156)"><path d="M.5 7H6" stroke="#000" stroke-width="1.4"/><path d="M6.5 7L3.5 4V10Z" fill="#000"/></g><g transform="translate(7,169)"><path d="M.5 .5V13M.5 1H7" stroke="#000" fill="none"/><path d="M1.5 3H5.5L1.5 7L5.5 11H1.5Z" fill="#000"/></g><g transform="translate(42,169)"><path d="M.5 .5V13M.5 1H7" stroke="#000" fill="none"/><path d="M1.5 3H5.5L1.5 7L5.5 11H1.5Z" fill="#000"/></g><g transform="translate(77,169)"><path d="M6.5 1H1.5V12.5H6.5" stroke="#000" fill="none"/></g><g transform="translate(91,169)"><path d="M.5 7L5.5 3V11Z" fill="#000"/></g><g transform="translate(98,169)"><path d="M3.5 3V11" stroke="#000" stroke-width="1.4"/><path d="M3.5 2.5L.5 5.5H6.5Z" fill="#000"/></g><g transform="translate(105,169)"><path d="M.5 7H6" stroke="#000" stroke-width="1.4"/><path d="M6.5 7L3.5 4V10Z" fill="#000"/></g><g transform="translate(21,182)"><path d="M.5 .5V13M.5 1H7" stroke="#000" fill="none"/><path d="M1.5 3H5.5L1.5 7L5.5 11H1.5Z" fill="#000"/></g><g transform="translate(42,182)"><path d="M1 7H6.5" stroke="#000" stroke-width="1.4"/><path d="M.5 7L3.5 4V10Z" fill="#000"/></g><g transform="translate(77,182)"><path d="M6.5 1H1.5V12.5H6.5" stroke="#000" fill="none"/></g><g transform="translate(98,182)"><path d="M1 5.5H6M1 8.5H6" stroke="#000"/></g><g transform="translate(49,195)"><path d="M1 5.5H6M1 8.5H6" stroke="#000"/></g><g transform="translate(77,195)"><path d="M6.5 1H1.5V12.5H6.5" stroke="#000" fill="none"/></g><g transform="translate(91,195)"><path d="M.5 7L5.5 3V11Z" fill="#000"/></g><g transform="translate(98,195)"><path d="M3.5 3V11" stroke="#000" stroke-width="1.4"/><path d="M3.5 2.5L.5 5.5H6.5Z" fill="#000"/></g><g transform="translate(105,195)"><path d="M1 7H6.5" stroke="#000" stroke-width="1.4"/><path d="M.5 7L3.5 4V10Z" fill="#000"/></g><g transform="translate(0,208)"><path d="M3.5 3V11" stroke="#000" stroke-width="1.4"/><path d="M3.5 2.5L.5 5.5H6.5Z" fill="#000"/></g><g transform="translate(35,208)"><path d="M.5 .5V13M.5 1H7" stroke="#000" fill="none"/><path d="M1.5 3H5.5L1.5 7L5.5 11H1.5Z" fill="#000"/></g><g transform="translate(70,208)"><path d="M.5 .5V13M.5 1H7" stroke="#000" fill="none"/><path d="M1.5 3H5.5L1.5 7L5.5 11H1.5Z" fill="#000"/></g><g transform="translate(77,208)"><path d="M.5 .5V13M.5 1H7" stroke="#000" fill="none"/><path d="M1.5 3H5.5L1.5 7L5.5 11H1.5Z" fill="#000"/></g><g transform="translate(98,208)"><path d="M.5 1H5.5V12.5H.5" stroke="#000" fill="none"/></g><g transform="translate(105,208)"><path d="M6.5 1H1.5V12.5H6.5" stroke="#000" fill="none"/></g><g transform="translate(14,221)"><path d="M.5 7L5.5 3V11Z" fill="#000"/></g><g transform="translate(21,221)"><path d="M3.5 3V11" stroke="#000" stroke-width="1.4"/><path d="M3.5 2.5L.5 5.5H6.5Z" fill="#000"/></g><g transform="translate(28,221)"><path d="M.5 7H6" stroke="#000" stroke-width="1.4"/><path d="M6.5 7L3.5 4V10Z" fill="#000"/></g><g transform="translate(35,221)"><path d="M3.5 3V11" stroke="#000" stroke-width="1.4"/><path d="M3.5 2.5L.5 5.5H6.5Z" fill="#000"/></g><g transform="translate(77,221)"><path d="M.5 .5V13M.5 1H7" stroke="#000" fill="none"/><path d="M1.5 3H5.5L1.5 7L5.5 11H1.5Z" fill="#000"/></g><g transform="translate(105,221)"><path d="M.5 .5V13M.5 1H7" stroke="#000" fill="none"/><path d="M1.5 3H5.5L1.5 7L5.5 11H1.5Z" fill="#000"/></g><g transform="translate(0,234)"><path d="M.5 .5V13M.5 1H7" stroke="#000" fill="none"/><path d="M1.5 3H5.5L1.5 7L5.5 11H1.5Z" fill="#000"/></g><g transform="translate(63,234)"><path d="M6.5 1H1.5V12.5H6.5" stroke="#000" fill="none"/></g><g transform="translate(77,234)"><path d="M.5 7L5.5 3V11Z" fill="#000"/></g><g transform="translate(84,234)"><path d="M3.5 3V11" stroke="#000" stroke-width="1.4"/><path d="M3.5 2.5L.5 5.5H6.5Z" fill="#000"/></g><g transform="translate(91,234)"><path d="M.5 7H6" stroke="#000" stroke-width="1.4"/><path d="M6.5 7L3.5 4V10Z" fill="#000"/></g><g transform="translate(98,234)"><path d="M3.5 3V11" stroke="#000" stroke-width="1.4"/><path d="M3.5 2.5L.5 5.5H6.5Z" fill="#000"/></g><g transform="translate(14,260)"><path d="M.5 .5V13M.5 1H7" stroke="#000" fill="none"/><path d="M1.5 3H5.5L1.5 7L5.5 11H1.5Z" fill="#000"/></g><g transform="translate(42,273)"><path d="M.5 .5V13M.5 1H7" stroke="#000" fill="none"/><path d="M1.5 3H5.5L1.5 7L5.5 11H1.5Z" fill="#000"/></g><g transform="translate(77,286)"><path d="M.5 .5V13M.5 1H7" stroke="#000" fill="none"/><path d="M1.5 3H5.5L1.5 7L5.5 11H1.5Z" fill="#000"/></g><g transform="translate(91,286)"><path d="M6.5 1H1.5V12.5H6.5" stroke="#000" fill="none"/></g><g transform="translate(98,286)"><path d="M.5 7H6" stroke="#000" stroke-width="1.4"/><path d="M6.5 7L3.5 4V10Z" fill="#000"/></g><g transform="translate(105,286)"><path d="M.5 .5V13M.5 1H7" stroke="#000" fill="none"/><path d="M1.5 3H5.5L1.5 7L5.5 11H1.5Z" fill="#000"/></g><g transform="translate(7,299)"><path d="M6.5 1H1.5V12.5H6.5" stroke="#000" fill="none"/></g><g transform="translate(14,299)"><path d="M.5 .5V13M.5 1H7" stroke="#000" fill="none"/><path d="M1.5 3H5.5L1.5 7L5.5 11H1.5Z" fill="#000"/></g><g transform="translate(21,299)"><path d="M.5 .5V13M.5 1H7" stroke="#000" fill="none"/><path d="M1.5 3H5.5L1.5 7L5.5 11H1.5Z" fill="#000"/></g><g transform="translate(35,299)"><path d="M6.5 1H1.5V12.5H6.5" stroke="#000" fill="none"/></g><g transform="translate(42,299)"><path d="M.5 .5V13M.5 1H7" stroke="#000" fill="none"/><path d="M1.5 3H5.5L1.5 7L5.5 11H1.5Z" fill="#000"/></g><g transform="translate(49,299)"><path d="M.5 .5V13M.5 1H7" stroke="#000" fill="none"/><path d="M1.5 3H5.5L1.5 7L5.5 11H1.5Z" fill="#000"/></g><g transform="translate(56,299)"><path d="M6.5 1H1.5V12.5H6.5" stroke="#000" fill="none"/></g><g transform="translate(98,299)"><path d="M3.5 1L5 2.5L2 4L5 5.5L2 7L5 8.5L2 10L5 11.5L3.5 13" stroke="#000" fill="none"/></g><g transform="translate(42,312)"><path d="M3.5 1L5 2.5L2 4L5 5.5L2 7L5 8.5L2 10L5 11.5L3.5 13" stroke="#000" fill="none"/></g><g transform="translate(70,312)"><path d="M3.5 1L5 2.5L2 4L5 5.5L2 7L5 8.5L2 10L5 11.5L3.5 13" stroke="#000" fill="none"/></g><g transform="translate(98,312)"><path d="M3.5 1L5 2.5L2 4L5 5.5L2 7L5 8.5L2 10L5 11.5L3.5 13" stroke="#000" fill="none"/></g><g transform="translate(42,325)"><path d="M3.5 1L5 2.5L2 4L5 5.5L2 7L5 8.5L2 10L5 11.5L3.5 13" stroke="#000" fill="none"/></g><g transform="translate(84,325)"><path d="M6.5 1H1.5V12.5H6.5" stroke="#000" fill="none"/></g><g transform="translate(0,338)"><path d="M6.5 7L1.5 3V11Z" fill="#000"/></g><g transform="translate(35,351)"><path d="M.5 .5V13M.5 1H7" stroke="#000" fill="none"/><path d="M1.5 3H5.5L1.5 7L5.5 11H1.5Z" fill="#000"/></g><g transform="translate(70,351)"><path d="M3.5 1L5 2.5L2 4L5 5.5L2 7L5 8.5L2 10L5 11.5L3.5 13" stroke="#000" fill="none"/></g><g transform="translate(28,364)"><path d="M1 7H6.5" stroke="#000" stroke-width="1.4"/><path d="M.5 7L3.5 4V10Z" fill="#000"/></g><g transform="translate(35,364)"><path d="M.5 .5V13M.5 1H7" stroke="#000" fill="none"/><path d="M1.5 3H5.5L1.5 7L5.5 11H1.5Z" fill="#000"/></g><g transform="translate(70,364)"><path d="M3.5 1L5 2.5L2 4L5 5.5L2 7L5 8.5L2 10L5 11.5L3.5 13" stroke="#000" fill="none"/></g><g transform="translate(84,364)"><path d="M.5 .5V13M.5 1H7" stroke="#000" fill="none"/><path d="M1.5 3H5.5L1.5 7L5.5 11H1.5Z" fill="#000"/></g><g transform="translate(0,377)"><path d="M1 7H6.5" stroke="#000" stroke-width="1.4"/><path d="M.5 7L3.5 4V10Z" fill="#000"/></g><g transform="translate(7,377)"><path d="M.5 .5V13M.5 1H7" stroke="#000" fill="none"/><path d="M1.5 3H5.5L1.5 7L5.5 11H1.5Z" fill="#000"/></g><g transform="translate(42,377)"><path d="M3.5 1L5 2.5L2 4L5 5.5L2 7L5 8.5L2 10L5 11.5L3.5 13" stroke="#000" fill="none"/></g><g transform="translate(7,390)"><path d="M.5 .5V13M.5 1H7" stroke="#000" fill="none"/><path d="M1.5 3H5.5L1.5 7L5.5 11H1.5Z" fill="#000"/></g><g transform="translate(56,390)"><path d="M6.5 1H1.5V12.5H6.5" stroke="#000" fill="none"/></g><g transform="translate(98,390)"><path d="M3.5 1L5 2.5L2 4L5 5.5L2 7L5 8.5L2 10L5 11.5L3.5 13" stroke="#000" fill="none"/></g><g transform="translate(0,403)"><path d="M1 7H6.5" stroke="#000" stroke-width="1.4"/><path d="M.5 7L3.5 4V10Z" fill="#000"/></g><g transform="translate(7,403)"><path d="M.5 .5V13M.5 1H7" stroke="#000" fill="none"/><path d="M1.5 3H5.5L1.5 7L5.5 11H1.5Z" fill="#000"/></g><g transform="translate(42,403)"><path d="M3.5 1L5 2.5L2 4L5 5.5L2 7L5 8.5L2 10L5 11.5L3.5 13" stroke="#000" fill="none"/></g><g transform="translate(98,403)"><path d="M3.5 1L5 2.5L2 4L5 5.5L2 7L5 8.5L2 10L5 11.5L3.5 13" stroke="#000" fill="none"/></g></svg>
<div class="a scr" style="left:1116px;top:447px;width:16px;height:417px"></div>
<div class="a raised" style="left:1116px;top:447px;width:16px;height:16px"></div>
<svg class="a" style="left:1120px;top:453px" width="8" height="5"><path d="M3.5 0 L7 4 H0Z" fill="#000"/></svg>
<div class="a raised" style="left:1116px;top:463px;width:16px;height:10px"></div>
<div class="a raised" style="left:1116px;top:848px;width:16px;height:16px"></div>
<svg class="a" style="left:1120px;top:854px" width="8" height="5"><path d="M0 0 H7 L3.5 4Z" fill="#000"/></svg>
</body></html>
